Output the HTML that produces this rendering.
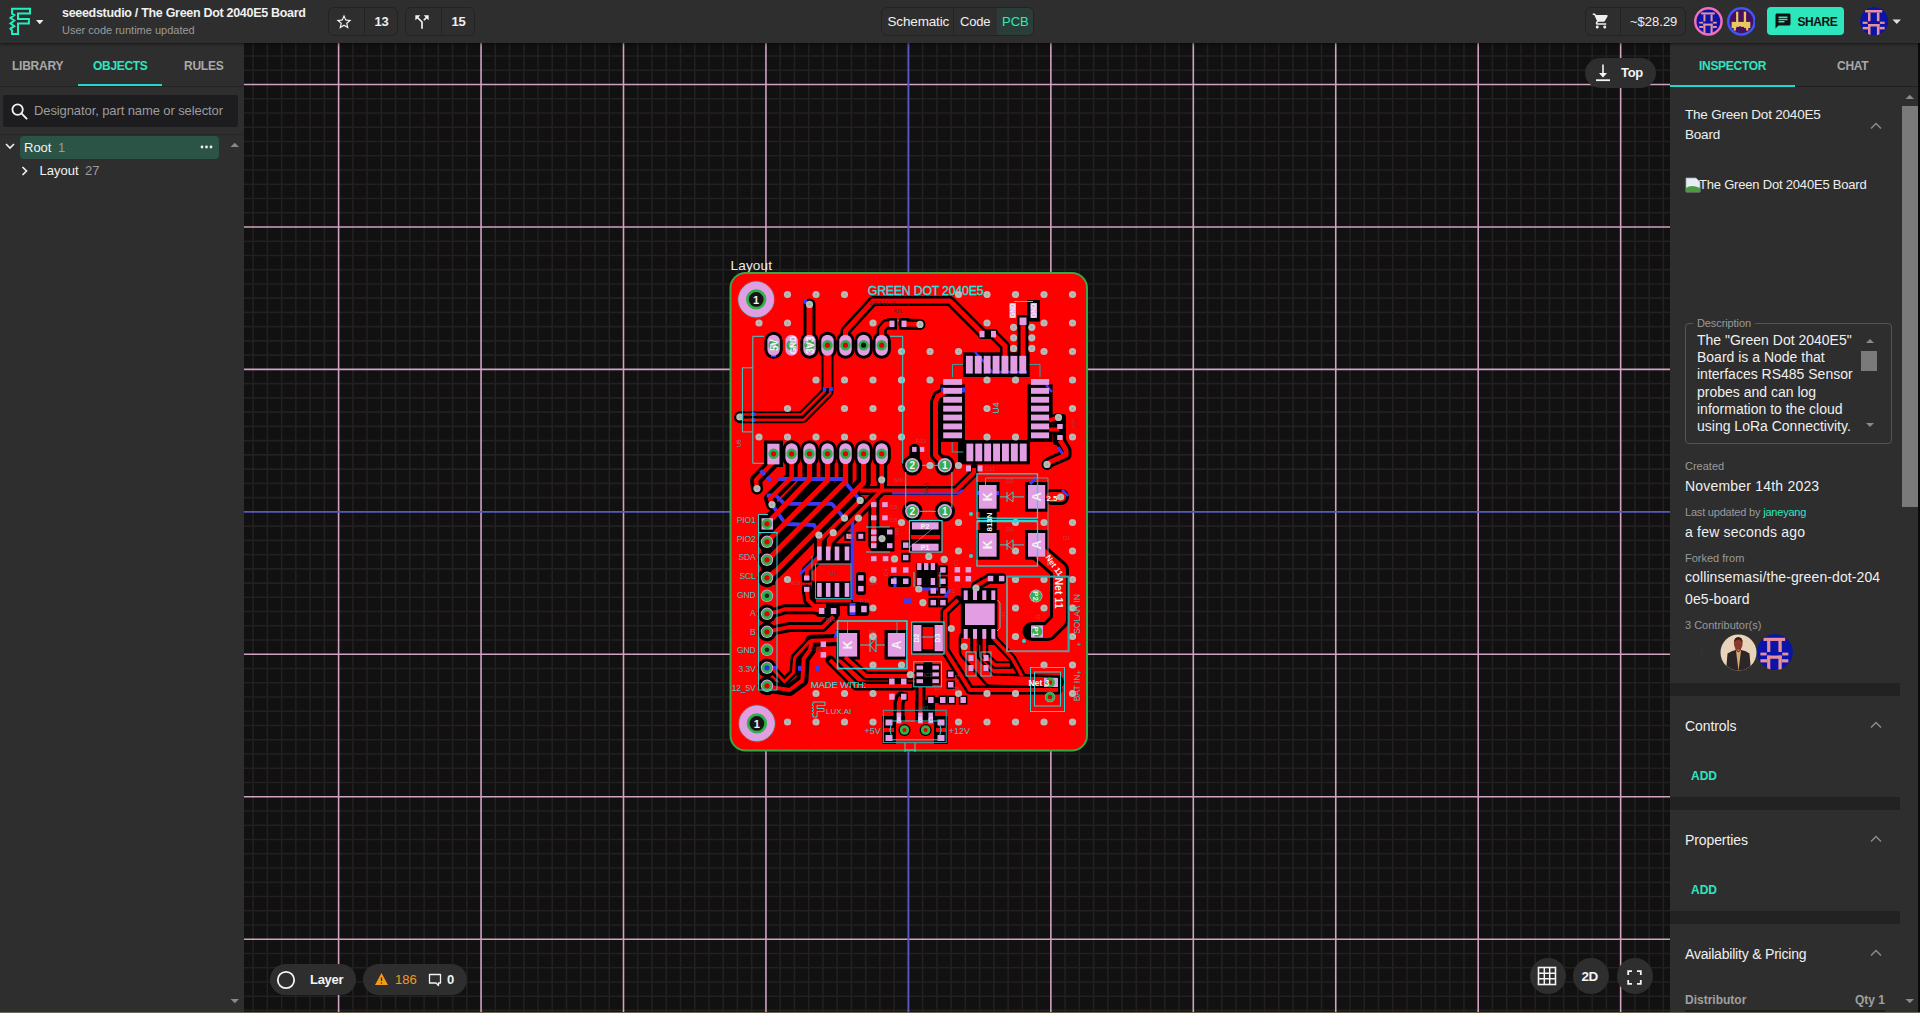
<!DOCTYPE html>
<html><head><meta charset="utf-8">
<style>
*{box-sizing:border-box;margin:0;padding:0}
html,body{width:1920px;height:1013px;overflow:hidden;background:#111111;font-family:"Liberation Sans",sans-serif;color:#fff}
.abs{position:absolute}

.hdr{position:absolute;left:0;top:0;width:1920px;height:43px;background:#2e2e2e;box-shadow:0 1px 3px rgba(0,0,0,.55);z-index:2}
.t{position:absolute;white-space:nowrap;line-height:1}
.lp{position:absolute;left:0;top:43px;width:244px;height:969px;background:#2e2e2e}
.rp{position:absolute;left:1670px;top:43px;width:250px;height:969px;background:#2e2e2e}
.bg{position:absolute;border:1px solid #232323;border-radius:6px;background:#2e2e2e}
.pill{position:absolute;background:#2c2c2c;border-radius:16px}
.circ{position:absolute;background:#2c2c2c;border-radius:50%}

</style></head><body>
<div class="abs" id="canvas" style="left:244px;top:43px;width:1426px;height:969px;background:#111111;overflow:hidden">
<svg class="grid" width="1426" height="969" viewBox="0 0 1426 969"><line x1="9.13" y1="0" x2="9.13" y2="969" stroke="#241f21" stroke-width="1.6"/><line x1="23.38" y1="0" x2="23.38" y2="969" stroke="#241f21" stroke-width="1.6"/><line x1="37.62" y1="0" x2="37.62" y2="969" stroke="#241f21" stroke-width="1.6"/><line x1="51.87" y1="0" x2="51.87" y2="969" stroke="#241f21" stroke-width="1.6"/><line x1="66.11" y1="0" x2="66.11" y2="969" stroke="#241f21" stroke-width="1.6"/><line x1="80.36" y1="0" x2="80.36" y2="969" stroke="#241f21" stroke-width="1.6"/><line x1="108.85" y1="0" x2="108.85" y2="969" stroke="#241f21" stroke-width="1.6"/><line x1="123.09" y1="0" x2="123.09" y2="969" stroke="#241f21" stroke-width="1.6"/><line x1="137.34" y1="0" x2="137.34" y2="969" stroke="#241f21" stroke-width="1.6"/><line x1="151.58" y1="0" x2="151.58" y2="969" stroke="#241f21" stroke-width="1.6"/><line x1="165.83" y1="0" x2="165.83" y2="969" stroke="#241f21" stroke-width="1.6"/><line x1="180.07" y1="0" x2="180.07" y2="969" stroke="#241f21" stroke-width="1.6"/><line x1="194.31" y1="0" x2="194.31" y2="969" stroke="#241f21" stroke-width="1.6"/><line x1="208.56" y1="0" x2="208.56" y2="969" stroke="#241f21" stroke-width="1.6"/><line x1="222.81" y1="0" x2="222.81" y2="969" stroke="#241f21" stroke-width="1.6"/><line x1="251.30" y1="0" x2="251.30" y2="969" stroke="#241f21" stroke-width="1.6"/><line x1="265.54" y1="0" x2="265.54" y2="969" stroke="#241f21" stroke-width="1.6"/><line x1="279.79" y1="0" x2="279.79" y2="969" stroke="#241f21" stroke-width="1.6"/><line x1="294.03" y1="0" x2="294.03" y2="969" stroke="#241f21" stroke-width="1.6"/><line x1="308.27" y1="0" x2="308.27" y2="969" stroke="#241f21" stroke-width="1.6"/><line x1="322.52" y1="0" x2="322.52" y2="969" stroke="#241f21" stroke-width="1.6"/><line x1="336.76" y1="0" x2="336.76" y2="969" stroke="#241f21" stroke-width="1.6"/><line x1="351.01" y1="0" x2="351.01" y2="969" stroke="#241f21" stroke-width="1.6"/><line x1="365.25" y1="0" x2="365.25" y2="969" stroke="#241f21" stroke-width="1.6"/><line x1="393.75" y1="0" x2="393.75" y2="969" stroke="#241f21" stroke-width="1.6"/><line x1="407.99" y1="0" x2="407.99" y2="969" stroke="#241f21" stroke-width="1.6"/><line x1="422.24" y1="0" x2="422.24" y2="969" stroke="#241f21" stroke-width="1.6"/><line x1="436.48" y1="0" x2="436.48" y2="969" stroke="#241f21" stroke-width="1.6"/><line x1="450.73" y1="0" x2="450.73" y2="969" stroke="#241f21" stroke-width="1.6"/><line x1="464.97" y1="0" x2="464.97" y2="969" stroke="#241f21" stroke-width="1.6"/><line x1="479.21" y1="0" x2="479.21" y2="969" stroke="#241f21" stroke-width="1.6"/><line x1="493.46" y1="0" x2="493.46" y2="969" stroke="#241f21" stroke-width="1.6"/><line x1="507.70" y1="0" x2="507.70" y2="969" stroke="#241f21" stroke-width="1.6"/><line x1="536.19" y1="0" x2="536.19" y2="969" stroke="#241f21" stroke-width="1.6"/><line x1="550.44" y1="0" x2="550.44" y2="969" stroke="#241f21" stroke-width="1.6"/><line x1="564.68" y1="0" x2="564.68" y2="969" stroke="#241f21" stroke-width="1.6"/><line x1="578.93" y1="0" x2="578.93" y2="969" stroke="#241f21" stroke-width="1.6"/><line x1="593.17" y1="0" x2="593.17" y2="969" stroke="#241f21" stroke-width="1.6"/><line x1="607.42" y1="0" x2="607.42" y2="969" stroke="#241f21" stroke-width="1.6"/><line x1="621.66" y1="0" x2="621.66" y2="969" stroke="#241f21" stroke-width="1.6"/><line x1="635.91" y1="0" x2="635.91" y2="969" stroke="#241f21" stroke-width="1.6"/><line x1="650.15" y1="0" x2="650.15" y2="969" stroke="#241f21" stroke-width="1.6"/><line x1="678.64" y1="0" x2="678.64" y2="969" stroke="#241f21" stroke-width="1.6"/><line x1="692.89" y1="0" x2="692.89" y2="969" stroke="#241f21" stroke-width="1.6"/><line x1="707.13" y1="0" x2="707.13" y2="969" stroke="#241f21" stroke-width="1.6"/><line x1="721.38" y1="0" x2="721.38" y2="969" stroke="#241f21" stroke-width="1.6"/><line x1="735.62" y1="0" x2="735.62" y2="969" stroke="#241f21" stroke-width="1.6"/><line x1="749.87" y1="0" x2="749.87" y2="969" stroke="#241f21" stroke-width="1.6"/><line x1="764.12" y1="0" x2="764.12" y2="969" stroke="#241f21" stroke-width="1.6"/><line x1="778.36" y1="0" x2="778.36" y2="969" stroke="#241f21" stroke-width="1.6"/><line x1="792.61" y1="0" x2="792.61" y2="969" stroke="#241f21" stroke-width="1.6"/><line x1="821.10" y1="0" x2="821.10" y2="969" stroke="#241f21" stroke-width="1.6"/><line x1="835.34" y1="0" x2="835.34" y2="969" stroke="#241f21" stroke-width="1.6"/><line x1="849.59" y1="0" x2="849.59" y2="969" stroke="#241f21" stroke-width="1.6"/><line x1="863.83" y1="0" x2="863.83" y2="969" stroke="#241f21" stroke-width="1.6"/><line x1="878.07" y1="0" x2="878.07" y2="969" stroke="#241f21" stroke-width="1.6"/><line x1="892.32" y1="0" x2="892.32" y2="969" stroke="#241f21" stroke-width="1.6"/><line x1="906.57" y1="0" x2="906.57" y2="969" stroke="#241f21" stroke-width="1.6"/><line x1="920.81" y1="0" x2="920.81" y2="969" stroke="#241f21" stroke-width="1.6"/><line x1="935.05" y1="0" x2="935.05" y2="969" stroke="#241f21" stroke-width="1.6"/><line x1="963.55" y1="0" x2="963.55" y2="969" stroke="#241f21" stroke-width="1.6"/><line x1="977.79" y1="0" x2="977.79" y2="969" stroke="#241f21" stroke-width="1.6"/><line x1="992.03" y1="0" x2="992.03" y2="969" stroke="#241f21" stroke-width="1.6"/><line x1="1006.28" y1="0" x2="1006.28" y2="969" stroke="#241f21" stroke-width="1.6"/><line x1="1020.53" y1="0" x2="1020.53" y2="969" stroke="#241f21" stroke-width="1.6"/><line x1="1034.77" y1="0" x2="1034.77" y2="969" stroke="#241f21" stroke-width="1.6"/><line x1="1049.01" y1="0" x2="1049.01" y2="969" stroke="#241f21" stroke-width="1.6"/><line x1="1063.26" y1="0" x2="1063.26" y2="969" stroke="#241f21" stroke-width="1.6"/><line x1="1077.51" y1="0" x2="1077.51" y2="969" stroke="#241f21" stroke-width="1.6"/><line x1="1105.99" y1="0" x2="1105.99" y2="969" stroke="#241f21" stroke-width="1.6"/><line x1="1120.24" y1="0" x2="1120.24" y2="969" stroke="#241f21" stroke-width="1.6"/><line x1="1134.49" y1="0" x2="1134.49" y2="969" stroke="#241f21" stroke-width="1.6"/><line x1="1148.73" y1="0" x2="1148.73" y2="969" stroke="#241f21" stroke-width="1.6"/><line x1="1162.97" y1="0" x2="1162.97" y2="969" stroke="#241f21" stroke-width="1.6"/><line x1="1177.22" y1="0" x2="1177.22" y2="969" stroke="#241f21" stroke-width="1.6"/><line x1="1191.47" y1="0" x2="1191.47" y2="969" stroke="#241f21" stroke-width="1.6"/><line x1="1205.71" y1="0" x2="1205.71" y2="969" stroke="#241f21" stroke-width="1.6"/><line x1="1219.95" y1="0" x2="1219.95" y2="969" stroke="#241f21" stroke-width="1.6"/><line x1="1248.45" y1="0" x2="1248.45" y2="969" stroke="#241f21" stroke-width="1.6"/><line x1="1262.69" y1="0" x2="1262.69" y2="969" stroke="#241f21" stroke-width="1.6"/><line x1="1276.93" y1="0" x2="1276.93" y2="969" stroke="#241f21" stroke-width="1.6"/><line x1="1291.18" y1="0" x2="1291.18" y2="969" stroke="#241f21" stroke-width="1.6"/><line x1="1305.43" y1="0" x2="1305.43" y2="969" stroke="#241f21" stroke-width="1.6"/><line x1="1319.67" y1="0" x2="1319.67" y2="969" stroke="#241f21" stroke-width="1.6"/><line x1="1333.91" y1="0" x2="1333.91" y2="969" stroke="#241f21" stroke-width="1.6"/><line x1="1348.16" y1="0" x2="1348.16" y2="969" stroke="#241f21" stroke-width="1.6"/><line x1="1362.40" y1="0" x2="1362.40" y2="969" stroke="#241f21" stroke-width="1.6"/><line x1="1390.89" y1="0" x2="1390.89" y2="969" stroke="#241f21" stroke-width="1.6"/><line x1="1405.14" y1="0" x2="1405.14" y2="969" stroke="#241f21" stroke-width="1.6"/><line x1="1419.38" y1="0" x2="1419.38" y2="969" stroke="#241f21" stroke-width="1.6"/><line x1="0" y1="13.01" x2="1426" y2="13.01" stroke="#241f21" stroke-width="1.6"/><line x1="0" y1="27.25" x2="1426" y2="27.25" stroke="#241f21" stroke-width="1.6"/><line x1="0" y1="55.75" x2="1426" y2="55.75" stroke="#241f21" stroke-width="1.6"/><line x1="0" y1="69.99" x2="1426" y2="69.99" stroke="#241f21" stroke-width="1.6"/><line x1="0" y1="84.23" x2="1426" y2="84.23" stroke="#241f21" stroke-width="1.6"/><line x1="0" y1="98.48" x2="1426" y2="98.48" stroke="#241f21" stroke-width="1.6"/><line x1="0" y1="112.72" x2="1426" y2="112.72" stroke="#241f21" stroke-width="1.6"/><line x1="0" y1="126.97" x2="1426" y2="126.97" stroke="#241f21" stroke-width="1.6"/><line x1="0" y1="141.21" x2="1426" y2="141.21" stroke="#241f21" stroke-width="1.6"/><line x1="0" y1="155.46" x2="1426" y2="155.46" stroke="#241f21" stroke-width="1.6"/><line x1="0" y1="169.70" x2="1426" y2="169.70" stroke="#241f21" stroke-width="1.6"/><line x1="0" y1="198.19" x2="1426" y2="198.19" stroke="#241f21" stroke-width="1.6"/><line x1="0" y1="212.44" x2="1426" y2="212.44" stroke="#241f21" stroke-width="1.6"/><line x1="0" y1="226.69" x2="1426" y2="226.69" stroke="#241f21" stroke-width="1.6"/><line x1="0" y1="240.93" x2="1426" y2="240.93" stroke="#241f21" stroke-width="1.6"/><line x1="0" y1="255.17" x2="1426" y2="255.17" stroke="#241f21" stroke-width="1.6"/><line x1="0" y1="269.42" x2="1426" y2="269.42" stroke="#241f21" stroke-width="1.6"/><line x1="0" y1="283.66" x2="1426" y2="283.66" stroke="#241f21" stroke-width="1.6"/><line x1="0" y1="297.91" x2="1426" y2="297.91" stroke="#241f21" stroke-width="1.6"/><line x1="0" y1="312.15" x2="1426" y2="312.15" stroke="#241f21" stroke-width="1.6"/><line x1="0" y1="340.64" x2="1426" y2="340.64" stroke="#241f21" stroke-width="1.6"/><line x1="0" y1="354.89" x2="1426" y2="354.89" stroke="#241f21" stroke-width="1.6"/><line x1="0" y1="369.13" x2="1426" y2="369.13" stroke="#241f21" stroke-width="1.6"/><line x1="0" y1="383.38" x2="1426" y2="383.38" stroke="#241f21" stroke-width="1.6"/><line x1="0" y1="397.62" x2="1426" y2="397.62" stroke="#241f21" stroke-width="1.6"/><line x1="0" y1="411.87" x2="1426" y2="411.87" stroke="#241f21" stroke-width="1.6"/><line x1="0" y1="426.11" x2="1426" y2="426.11" stroke="#241f21" stroke-width="1.6"/><line x1="0" y1="440.36" x2="1426" y2="440.36" stroke="#241f21" stroke-width="1.6"/><line x1="0" y1="454.60" x2="1426" y2="454.60" stroke="#241f21" stroke-width="1.6"/><line x1="0" y1="483.10" x2="1426" y2="483.10" stroke="#241f21" stroke-width="1.6"/><line x1="0" y1="497.34" x2="1426" y2="497.34" stroke="#241f21" stroke-width="1.6"/><line x1="0" y1="511.59" x2="1426" y2="511.59" stroke="#241f21" stroke-width="1.6"/><line x1="0" y1="525.83" x2="1426" y2="525.83" stroke="#241f21" stroke-width="1.6"/><line x1="0" y1="540.08" x2="1426" y2="540.08" stroke="#241f21" stroke-width="1.6"/><line x1="0" y1="554.32" x2="1426" y2="554.32" stroke="#241f21" stroke-width="1.6"/><line x1="0" y1="568.56" x2="1426" y2="568.56" stroke="#241f21" stroke-width="1.6"/><line x1="0" y1="582.81" x2="1426" y2="582.81" stroke="#241f21" stroke-width="1.6"/><line x1="0" y1="597.05" x2="1426" y2="597.05" stroke="#241f21" stroke-width="1.6"/><line x1="0" y1="625.54" x2="1426" y2="625.54" stroke="#241f21" stroke-width="1.6"/><line x1="0" y1="639.79" x2="1426" y2="639.79" stroke="#241f21" stroke-width="1.6"/><line x1="0" y1="654.03" x2="1426" y2="654.03" stroke="#241f21" stroke-width="1.6"/><line x1="0" y1="668.28" x2="1426" y2="668.28" stroke="#241f21" stroke-width="1.6"/><line x1="0" y1="682.52" x2="1426" y2="682.52" stroke="#241f21" stroke-width="1.6"/><line x1="0" y1="696.77" x2="1426" y2="696.77" stroke="#241f21" stroke-width="1.6"/><line x1="0" y1="711.01" x2="1426" y2="711.01" stroke="#241f21" stroke-width="1.6"/><line x1="0" y1="725.26" x2="1426" y2="725.26" stroke="#241f21" stroke-width="1.6"/><line x1="0" y1="739.50" x2="1426" y2="739.50" stroke="#241f21" stroke-width="1.6"/><line x1="0" y1="768.00" x2="1426" y2="768.00" stroke="#241f21" stroke-width="1.6"/><line x1="0" y1="782.24" x2="1426" y2="782.24" stroke="#241f21" stroke-width="1.6"/><line x1="0" y1="796.49" x2="1426" y2="796.49" stroke="#241f21" stroke-width="1.6"/><line x1="0" y1="810.73" x2="1426" y2="810.73" stroke="#241f21" stroke-width="1.6"/><line x1="0" y1="824.97" x2="1426" y2="824.97" stroke="#241f21" stroke-width="1.6"/><line x1="0" y1="839.22" x2="1426" y2="839.22" stroke="#241f21" stroke-width="1.6"/><line x1="0" y1="853.46" x2="1426" y2="853.46" stroke="#241f21" stroke-width="1.6"/><line x1="0" y1="867.71" x2="1426" y2="867.71" stroke="#241f21" stroke-width="1.6"/><line x1="0" y1="881.95" x2="1426" y2="881.95" stroke="#241f21" stroke-width="1.6"/><line x1="0" y1="910.44" x2="1426" y2="910.44" stroke="#241f21" stroke-width="1.6"/><line x1="0" y1="924.69" x2="1426" y2="924.69" stroke="#241f21" stroke-width="1.6"/><line x1="0" y1="938.93" x2="1426" y2="938.93" stroke="#241f21" stroke-width="1.6"/><line x1="0" y1="953.18" x2="1426" y2="953.18" stroke="#241f21" stroke-width="1.6"/><line x1="0" y1="967.42" x2="1426" y2="967.42" stroke="#241f21" stroke-width="1.6"/><line x1="94.60" y1="0" x2="94.60" y2="969" stroke="#cfa3c1" stroke-width="1.6"/><line x1="237.05" y1="0" x2="237.05" y2="969" stroke="#cfa3c1" stroke-width="1.6"/><line x1="379.50" y1="0" x2="379.50" y2="969" stroke="#cfa3c1" stroke-width="1.6"/><line x1="521.95" y1="0" x2="521.95" y2="969" stroke="#cfa3c1" stroke-width="1.6"/><line x1="806.85" y1="0" x2="806.85" y2="969" stroke="#cfa3c1" stroke-width="1.6"/><line x1="949.30" y1="0" x2="949.30" y2="969" stroke="#cfa3c1" stroke-width="1.6"/><line x1="1091.75" y1="0" x2="1091.75" y2="969" stroke="#cfa3c1" stroke-width="1.6"/><line x1="1234.20" y1="0" x2="1234.20" y2="969" stroke="#cfa3c1" stroke-width="1.6"/><line x1="1376.65" y1="0" x2="1376.65" y2="969" stroke="#cfa3c1" stroke-width="1.6"/><line x1="0" y1="41.50" x2="1426" y2="41.50" stroke="#cfa3c1" stroke-width="1.6"/><line x1="0" y1="183.95" x2="1426" y2="183.95" stroke="#cfa3c1" stroke-width="1.6"/><line x1="0" y1="326.40" x2="1426" y2="326.40" stroke="#cfa3c1" stroke-width="1.6"/><line x1="0" y1="611.30" x2="1426" y2="611.30" stroke="#cfa3c1" stroke-width="1.6"/><line x1="0" y1="753.75" x2="1426" y2="753.75" stroke="#cfa3c1" stroke-width="1.6"/><line x1="0" y1="896.20" x2="1426" y2="896.20" stroke="#cfa3c1" stroke-width="1.6"/><line x1="664.40" y1="0" x2="664.40" y2="969" stroke="#5858c4" stroke-width="1.9"/><line x1="0" y1="468.85" x2="1426" y2="468.85" stroke="#5858c4" stroke-width="1.9"/></svg>
</div>
<div class="hdr">
<svg class="abs" style="left:0;top:0" width="50" height="42" viewBox="0 0 50 42">
<path d="M12.1 8.8 H30 V13.6 H18 V19.1 H28.9 V23.5 H18 V34 H12.1 V30.8 L10.5 28.6 L14.3 26.2 L10.5 23.5 L14.3 20.5 L10.5 18 L14.3 15.05 L12.1 13.6 Z" fill="none" stroke="#24eec0" stroke-width="2" stroke-linejoin="miter"/>
<path d="M36 20 H43.5 L39.75 24.2Z" fill="#eee"/>
</svg>
<div class="t" style="left:62px;top:7px;font-size:12.5px;font-weight:bold;color:#f0f0f0;letter-spacing:-0.3px">seeedstudio / The Green Dot 2040E5 Board</div>
<div class="t" style="left:62px;top:25px;font-size:11px;color:#9a9a9a">User code runtime updated</div>

<div class="bg" style="left:328px;top:7px;width:70px;height:29px"></div>
<div class="abs" style="left:364px;top:8px;width:1px;height:27px;background:#232323"></div>
<svg class="abs" style="left:335.2px;top:13.1px" width="18" height="18" viewBox="0 0 24 24"><path d="M22 9.24l-7.19-.62L12 2 9.19 8.63 2 9.24l5.46 4.73L5.82 21 12 17.27 18.18 21l-1.63-7.03L22 9.24zM12 15.4l-3.76 2.27 1-4.28-3.32-2.88 4.38-.38L12 6.1l1.71 4.04 4.38.38-3.32 2.88 1 4.28L12 15.4z" fill="#f2f2f2"/></svg>
<div class="t" style="left:374.5px;top:15px;font-size:13px;font-weight:bold;color:#eee;letter-spacing:-0.3px">13</div>

<div class="bg" style="left:405px;top:7px;width:70px;height:29px"></div>
<div class="abs" style="left:441px;top:8px;width:1px;height:27px;background:#232323"></div>
<svg class="abs" style="left:411.7px;top:11.7px" width="20" height="20" viewBox="0 0 24 24"><path d="M14 4l2.29 2.29-2.88 2.88 1.42 1.42 2.88-2.88L20 10V4zm-4 0H4v6l2.29-2.29 4.71 4.7V20h2v-8.41l-5.29-5.3z" fill="#f2f2f2"/></svg>
<div class="t" style="left:451.5px;top:15px;font-size:13px;font-weight:bold;color:#eee;letter-spacing:-0.3px">15</div>

<div class="bg" style="left:881px;top:7px;width:153px;height:29px"></div>
<div class="abs" style="left:953px;top:8px;width:1px;height:27px;background:#232323"></div>
<div class="abs" style="left:997px;top:8px;width:36px;height:27px;background:#2b3d38;border-radius:0 5px 5px 0"></div>
<div class="t" style="left:887.5px;top:14.5px;font-size:13.5px;color:#f0f0f0;letter-spacing:-0.15px">Schematic</div>
<div class="t" style="left:960px;top:15px;font-size:13px;color:#f0f0f0;letter-spacing:-0.2px">Code</div>
<div class="t" style="left:1002px;top:15px;font-size:13px;color:#2fe8b8">PCB</div>

<div class="bg" style="left:1585px;top:7px;width:101px;height:29px"></div>
<div class="abs" style="left:1620px;top:8px;width:1px;height:27px;background:#232323"></div>
<svg class="abs" style="left:1592px;top:12px" width="18" height="18" viewBox="0 0 24 24"><path d="M7 18c-1.1 0-2 .9-2 2s.9 2 2 2 2-.9 2-2-.9-2-2-2zM1 2v2h2l3.6 7.6-1.4 2.4c-.1.3-.2.6-.2 1 0 1.1.9 2 2 2h12v-2H7.4c-.1 0-.2-.1-.2-.2v-.1l.9-1.7h7.4c.8 0 1.4-.4 1.7-1l3.6-6.5c.1-.2.1-.3.1-.5 0-.6-.4-1-1-1H5.2l-.9-2H1zm16 16c-1.1 0-2 .9-2 2s.9 2 2 2 2-.9 2-2-.9-2-2-2z" fill="#eee"/></svg>
<div class="t" style="left:1630px;top:15px;font-size:13px;color:#eee;letter-spacing:0px">~$28.29</div>

<svg class="abs" style="left:1694.1999999999998px;top:7.1px" width="28.8" height="28.8" viewBox="-14.4 -14.4 28.8 28.8"><defs><clipPath id="ac170821"><circle cx="0" cy="0" r="14.4"/></clipPath></defs><g clip-path="url(#ac170821)"><circle cx="0" cy="0" r="14.4" fill="#0a14a8"/><g fill="#e8909a"><rect x="-7.28" y="-8.96" width="13.68" height="2.00"/><rect x="-4.96" y="-6.96" width="2.00" height="6.96"/><rect x="2.16" y="-6.96" width="2.08" height="6.96"/><rect x="-9.20" y="0.40" width="3.92" height="1.76"/><rect x="4.56" y="0.40" width="3.84" height="1.76"/><rect x="-4.96" y="2.24" width="9.20" height="2.00"/><rect x="-9.20" y="4.56" width="4.24" height="2.00"/><rect x="4.24" y="4.56" width="4.16" height="2.00"/><rect x="-4.96" y="2.24" width="2.00" height="9.36"/><rect x="2.16" y="2.24" width="2.08" height="9.36"/></g></g><circle cx="0" cy="0" r="13.15" fill="none" stroke="#f070b0" stroke-width="2.5"/></svg>
<svg class="abs" style="left:1726.6px;top:7.1px" width="28.8" height="28.8" viewBox="-14.4 -14.4 28.8 28.8"><defs><clipPath id="ac174121"><circle cx="0" cy="0" r="14.4"/></clipPath></defs><g clip-path="url(#ac174121)"><circle cx="0" cy="0" r="14.4" fill="#4a1060"/><g fill="#e8c860"><rect x="-5.30" y="-9.70" width="2.20" height="10.40"/><rect x="2.40" y="-9.70" width="2.30" height="10.40"/><rect x="-9.80" y="0.50" width="18.70" height="4.20"/><rect x="-9.80" y="4.50" width="4.80" height="2.10"/><rect x="2.70" y="4.50" width="6.20" height="2.10"/><rect x="-7.70" y="6.50" width="2.20" height="2.60"/><rect x="4.70" y="6.50" width="2.20" height="2.60"/><rect x="-5.20" y="4.50" width="3.20" height="1.00"/><rect x="-0.50" y="4.50" width="3.30" height="1.00"/></g></g><circle cx="0" cy="0" r="13.15" fill="none" stroke="#3a58f8" stroke-width="2.5"/></svg>
<div class="abs" style="left:1767px;top:7px;width:77px;height:28px;background:#2de6bb;border-radius:4px"></div>
<svg class="abs" style="left:1774px;top:12px" width="18" height="18" viewBox="0 0 24 24"><path d="M20 2H4c-1.1 0-2 .9-2 2v18l4-4h14c1.1 0 2-.9 2-2V4c0-1.1-.9-2-2-2zM6 9h12v2H6zm8 5H6v-2h8zm4-6H6V6h12z" fill="#111"/></svg>
<div class="t" style="left:1797.5px;top:15.5px;font-size:12px;font-weight:bold;color:#111;letter-spacing:-0.45px">SHARE</div>
<svg class="abs" style="left:1860.0px;top:7.199999999999999px" width="28.4" height="28.4" viewBox="-14.2 -14.2 28.4 28.4"><defs><clipPath id="ac187421"><circle cx="0" cy="0" r="14.2"/></clipPath></defs><g clip-path="url(#ac187421)"><circle cx="0" cy="0" r="14.2" fill="#0a14a8"/><g fill="#e8909a"><rect x="-9.10" y="-11.20" width="17.10" height="2.50"/><rect x="-6.20" y="-8.70" width="2.50" height="8.70"/><rect x="2.70" y="-8.70" width="2.60" height="8.70"/><rect x="-11.50" y="0.50" width="4.90" height="2.20"/><rect x="5.70" y="0.50" width="4.80" height="2.20"/><rect x="-6.20" y="2.80" width="11.50" height="2.50"/><rect x="-11.50" y="5.70" width="5.30" height="2.50"/><rect x="5.30" y="5.70" width="5.20" height="2.50"/><rect x="-6.20" y="2.80" width="2.50" height="11.70"/><rect x="2.70" y="2.80" width="2.60" height="11.70"/></g></g></svg>
<svg class="abs" style="left:1892px;top:19px" width="10" height="6" viewBox="0 0 10 6"><path d="M0.5 0.5 H9 L4.75 5Z" fill="#ddd"/></svg>
</div><div class="lp">
<div class="t" style="left:12px;top:17px;font-size:12px;font-weight:bold;color:#a9a9a9;letter-spacing:-0.25px">LIBRARY</div>
<div class="t" style="left:93px;top:17px;font-size:12px;font-weight:bold;color:#2de6c0;letter-spacing:-0.3px">OBJECTS</div>
<div class="t" style="left:184px;top:17px;font-size:12px;font-weight:bold;color:#a9a9a9;letter-spacing:-0.25px">RULES</div>
<div class="abs" style="left:0;top:43px;width:244px;height:1px;background:#222"></div>
<div class="abs" style="left:78px;top:41px;width:84px;height:2px;background:#22d8cc"></div>
<div class="abs" style="left:3px;top:52px;width:235px;height:32px;background:#1d1d1f;border-radius:2px"></div>
<svg class="abs" style="left:11px;top:60px" width="17" height="17" viewBox="0 0 17 17"><circle cx="6.6" cy="6.6" r="5.2" fill="none" stroke="#f2f2f2" stroke-width="1.8"/><path d="M10.4 10.4 L15.6 15.6" stroke="#f2f2f2" stroke-width="1.9" stroke-linecap="round"/></svg>
<div class="t" style="left:34px;top:61px;font-size:13px;color:#9c9c9c;letter-spacing:-0.1px">Designator, part name or selector</div>
<div class="abs" style="left:0;top:91px;width:244px;height:1px;background:#262626"></div>
<div class="abs" style="left:20px;top:92.5px;width:199px;height:23px;background:#2c5446;border-radius:4px"></div>
<svg class="abs" style="left:4px;top:99px" width="12" height="9" viewBox="0 0 12 9"><path d="M2 2 L6 6 L10 2" fill="none" stroke="#eee" stroke-width="1.7"/></svg>
<div class="t" style="left:24px;top:97.5px;font-size:13px;color:#f2f2f2">Root</div>
<div class="t" style="left:58px;top:97.5px;font-size:13px;color:#9a9a9a">1</div>
<svg class="abs" style="left:200px;top:101px" width="14" height="6" viewBox="0 0 14 6"><circle cx="2" cy="3" r="1.4" fill="#eee"/><circle cx="6.5" cy="3" r="1.4" fill="#eee"/><circle cx="11" cy="3" r="1.4" fill="#eee"/></svg>
<svg class="abs" style="left:230px;top:99px" width="10" height="6" viewBox="0 0 10 6"><path d="M0.5 5 H9 L4.75 0.8Z" fill="#888"/></svg>
<svg class="abs" style="left:20px;top:122px" width="9" height="12" viewBox="0 0 9 12"><path d="M2.5 2 L6.5 6 L2.5 10" fill="none" stroke="#eee" stroke-width="1.7"/></svg>
<div class="t" style="left:39.5px;top:120.5px;font-size:13px;color:#f2f2f2">Layout</div>
<div class="t" style="left:85px;top:120.5px;font-size:13px;color:#9a9a9a">27</div>
<svg class="abs" style="left:230px;top:955px" width="10" height="6" viewBox="0 0 10 6"><path d="M0.5 1 H9 L4.75 5.2Z" fill="#888"/></svg>
</div><div class="rp">
<div class="t" style="left:29px;top:17px;font-size:12px;font-weight:bold;color:#2de6c0;letter-spacing:-0.3px">INSPECTOR</div>
<div class="t" style="left:167px;top:17px;font-size:12px;font-weight:bold;color:#a9a9a9;letter-spacing:-0.25px">CHAT</div>
<div class="abs" style="left:0;top:43px;width:250px;height:1px;background:#1f1f1f"></div>
<div class="abs" style="left:0;top:41.5px;width:125px;height:2px;background:#22d8cc"></div>
<div class="abs" style="left:232px;top:63px;width:16px;height:401px;background:#7a7a7a"></div>
<svg class="abs" style="left:235px;top:51px" width="10" height="6" viewBox="0 0 10 6"><path d="M0.5 5 H9 L4.75 0.8Z" fill="#8a8a8a"/></svg>
<svg class="abs" style="left:235px;top:955px" width="10" height="6" viewBox="0 0 10 6"><path d="M0.5 1 H9 L4.75 5.2Z" fill="#8a8a8a"/></svg>
<div class="abs" style="left:248px;top:0;width:2px;height:969px;background:#0a0a0a"></div>

<div class="t" style="left:15px;top:61.5px;font-size:13.5px;color:#eee;line-height:20.3px;letter-spacing:-0.2px">The Green Dot 2040E5<br>Board</div>
<svg class="abs" style="left:200px;top:79px" width="12" height="8" viewBox="0 0 12 8"><path d="M1 6.5 L6 1.5 L11 6.5" fill="none" stroke="#8a8a8a" stroke-width="1.5"/></svg>
<svg class="abs" style="left:15px;top:134px" width="16" height="16" viewBox="0 0 16 16"><path d="M1 1 H11 L15 5 V15 H1Z" fill="#e8eef4" stroke="#9aa" stroke-width="0.8"/><path d="M1 15 L1 11 Q6 7 15 11 V15Z" fill="#4a9a40"/></svg>
<div class="t" style="left:29px;top:135px;font-size:13px;color:#eee;letter-spacing:-0.2px">The Green Dot 2040E5 Board</div>

<div class="abs" style="left:15px;top:280px;width:207px;height:121px;border:1px solid #555;border-radius:4px"></div>
<div class="abs" style="left:23px;top:275px;width:62px;height:10px;background:#2e2e2e"></div>
<div class="t" style="left:27px;top:275px;font-size:11px;color:#9a9a9a;letter-spacing:-0.1px">Description</div>
<div class="t" style="left:27px;top:289px;font-size:14px;color:#f0f0f0;line-height:17.2px;white-space:normal;width:175px;letter-spacing:0px">The "Green Dot 2040E5" Board is a Node that interfaces RS485 Sensor probes and can log information to the cloud using LoRa Connectivity.</div>
<svg class="abs" style="left:195px;top:295px" width="10" height="6" viewBox="0 0 10 6"><path d="M1 5 H9 L5 1Z" fill="#8a8a8a"/></svg>
<div class="abs" style="left:191px;top:308px;width:16px;height:20px;background:#7a7a7a"></div>
<svg class="abs" style="left:195px;top:379px" width="10" height="6" viewBox="0 0 10 6"><path d="M1 1 H9 L5 5Z" fill="#8a8a8a"/></svg>

<div class="t" style="left:15px;top:418px;font-size:11px;color:#9a9a9a">Created</div>
<div class="t" style="left:15px;top:436px;font-size:14px;color:#f0f0f0;letter-spacing:0.2px">November 14th 2023</div>
<div class="t" style="left:15px;top:464px;font-size:11px;color:#9a9a9a;letter-spacing:-0.2px">Last updated by <span style="color:#2de6c0">janeyang</span></div>
<div class="t" style="left:15px;top:482px;font-size:14px;color:#f0f0f0;letter-spacing:0.2px">a few seconds ago</div>
<div class="t" style="left:15px;top:510px;font-size:11px;color:#9a9a9a">Forked from</div>
<div class="t" style="left:15px;top:524px;font-size:14px;color:#f0f0f0;line-height:21.5px;letter-spacing:0.1px">collinsemasi/the-green-dot-204<br>0e5-board</div>
<div class="t" style="left:15px;top:577px;font-size:11px;color:#9a9a9a">3 Contributor(s)</div>
<div class="t" style="left:30px;top:600px;font-size:14px;color:#333">j</div>
<svg class="abs" style="left:50px;top:591px" width="37" height="37" viewBox="0 0 37 37"><defs><clipPath id="pc"><circle cx="18.5" cy="18.5" r="18"/></clipPath></defs><g clip-path="url(#pc)"><rect width="37" height="37" fill="#e8d4ba"/><path d="M6 37 L7.5 19.5 Q12 16.5 15.5 16 L18.5 18 L21.5 16 Q26 16.5 29.5 19.5 L31 37Z" fill="#2e2626"/><path d="M16 16.5 L18.5 37 L21 16.5 L18.5 18Z" fill="#d8a878"/><ellipse cx="18.3" cy="10" rx="4.3" ry="6" fill="#8a3a2a"/><path d="M13.8 9 Q14 3 18.3 3 Q22.6 3 22.8 9 Q21 5.5 18.3 5.5 Q15.6 5.5 13.8 9Z" fill="#3a1a12"/><path d="M15.5 14 L18.3 17 L21 14 L21 16 L18.3 18.5 L15.5 16Z" fill="#7a3020"/></g></svg>
<svg class="abs" style="left:86.7px;top:591px" width="36" height="36" viewBox="-18 -18 36 36"><defs><clipPath id="ac1774652"><circle cx="0" cy="0" r="18"/></clipPath></defs><g clip-path="url(#ac1774652)"><circle cx="0" cy="0" r="18" fill="#0a14a8"/><g fill="#e8909a"><rect x="-11.56" y="-14.22" width="21.72" height="3.17"/><rect x="-7.87" y="-11.05" width="3.17" height="11.05"/><rect x="3.43" y="-11.05" width="3.30" height="11.05"/><rect x="-14.61" y="0.64" width="6.22" height="2.79"/><rect x="7.24" y="0.64" width="6.10" height="2.79"/><rect x="-7.87" y="3.56" width="14.61" height="3.17"/><rect x="-14.61" y="7.24" width="6.73" height="3.17"/><rect x="6.73" y="7.24" width="6.60" height="3.17"/><rect x="-7.87" y="3.56" width="3.17" height="14.86"/><rect x="3.43" y="3.56" width="3.30" height="14.86"/></g></g></svg>

<div class="abs" style="left:0;top:640px;width:230px;height:13px;background:#222"></div>
<div class="t" style="left:15px;top:676px;font-size:14px;color:#f0f0f0;letter-spacing:-0.1px">Controls</div>
<svg class="abs" style="left:200px;top:678px" width="12" height="8" viewBox="0 0 12 8"><path d="M1 6.5 L6 1.5 L11 6.5" fill="none" stroke="#8a8a8a" stroke-width="1.5"/></svg>
<div class="t" style="left:21px;top:727px;font-size:12px;font-weight:bold;color:#2de6c0">ADD</div>

<div class="abs" style="left:0;top:754px;width:230px;height:13px;background:#222"></div>
<div class="t" style="left:15px;top:790px;font-size:14px;color:#f0f0f0;letter-spacing:-0.1px">Properties</div>
<svg class="abs" style="left:200px;top:792px" width="12" height="8" viewBox="0 0 12 8"><path d="M1 6.5 L6 1.5 L11 6.5" fill="none" stroke="#8a8a8a" stroke-width="1.5"/></svg>
<div class="t" style="left:21px;top:841px;font-size:12px;font-weight:bold;color:#2de6c0">ADD</div>

<div class="abs" style="left:0;top:868px;width:230px;height:13px;background:#222"></div>
<div class="t" style="left:15px;top:904px;font-size:14px;color:#f0f0f0;letter-spacing:-0.2px">Availability &amp; Pricing</div>
<svg class="abs" style="left:200px;top:906px" width="12" height="8" viewBox="0 0 12 8"><path d="M1 6.5 L6 1.5 L11 6.5" fill="none" stroke="#8a8a8a" stroke-width="1.5"/></svg>
<div class="t" style="left:15px;top:951px;font-size:12px;font-weight:bold;color:#a0a0a0">Distributor</div>
<div class="t" style="left:185px;top:951px;font-size:12px;font-weight:bold;color:#a0a0a0">Qty 1</div>
<div class="abs" style="left:15px;top:967px;width:200px;height:1.5px;background:#1e1e1e"></div>
</div>
<div class="pill" style="left:1585px;top:58px;width:71px;height:30px;border-radius:15px;background:#2e2e2e"></div>
<svg class="abs" style="left:1594px;top:63px" width="18" height="20" viewBox="0 0 18 20"><path d="M9 1.5 V13.5" stroke="#f4f4f4" stroke-width="1.6"/><path d="M5 10 L9 14.5 L13 10Z" fill="#f4f4f4"/><path d="M2 17.2 H16" stroke="#f4f4f4" stroke-width="1.8"/></svg>
<div class="t" style="left:1621px;top:66px;font-size:13px;font-weight:bold;color:#f4f4f4;letter-spacing:-0.3px">Top</div>

<div class="pill" style="left:269.5px;top:964px;width:86px;height:31px;border-radius:15.5px;background:#2e2e2e"></div>
<svg class="abs" style="left:276px;top:970px" width="20" height="20" viewBox="0 0 20 20"><circle cx="10" cy="10" r="8.2" fill="none" stroke="#f4f4f4" stroke-width="1.8"/></svg>
<div class="t" style="left:310px;top:973px;font-size:13px;font-weight:bold;color:#f4f4f4;letter-spacing:-0.3px">Layer</div>

<div class="pill" style="left:363px;top:964px;width:104px;height:31px;border-radius:15.5px;background:#2e2e2e"></div>
<svg class="abs" style="left:374px;top:972px" width="15" height="14" viewBox="0 0 15 14"><path d="M7.5 1 L14 13 H1Z" fill="#f39a1a"/><path d="M7.5 5.5 V9" stroke="#2e2e2e" stroke-width="1.3"/><circle cx="7.5" cy="11" r="0.7" fill="#2e2e2e"/></svg>
<div class="t" style="left:395px;top:973px;font-size:13px;color:#f39a1a">186</div>
<svg class="abs" style="left:428px;top:973px" width="14" height="14" viewBox="0 0 14 14"><path d="M1.5 1.5 H12.5 V10 H10.5 V12.5 L8 10 H1.5Z" fill="none" stroke="#f4f4f4" stroke-width="1.3" stroke-linejoin="round"/></svg>
<div class="t" style="left:447px;top:973px;font-size:13px;font-weight:bold;color:#f4f4f4">0</div>

<div class="circ" style="left:1530px;top:958px;width:36px;height:36px;background:#2e2e2e"></div>
<svg class="abs" style="left:1537px;top:966px" width="20" height="20" viewBox="0 0 20 20"><rect x="1.5" y="1.5" width="17" height="17" fill="none" stroke="#f4f4f4" stroke-width="1.6"/><path d="M7.3 1.5V18.5M12.7 1.5V18.5M1.5 7.3H18.5M1.5 12.7H18.5" stroke="#f4f4f4" stroke-width="1.5"/></svg>
<div class="circ" style="left:1573px;top:958px;width:36px;height:36px;background:#2e2e2e"></div>
<div class="t" style="left:1581.5px;top:969.5px;font-size:13.5px;font-weight:bold;color:#f4f4f4;letter-spacing:-0.4px">2D</div>
<div class="circ" style="left:1616.5px;top:958px;width:36px;height:36px;background:#2e2e2e"></div>
<svg class="abs" style="left:1626.5px;top:969.5px" width="15" height="15" viewBox="0 0 15 15"><path d="M1.2 5V1.2H5M10 1.2H13.8V5M13.8 10V13.8H10M5 13.8H1.2V10" fill="none" stroke="#f4f4f4" stroke-width="1.8"/></svg>
<div class="abs" style="left:0;top:1012px;width:1920px;height:1px;background:#6a6858"></div>

<svg class="abs" style="left:720px;top:250px;font-family:'Liberation Sans',sans-serif" width="380" height="510" viewBox="720 250 380 510">
<text x="730.6" y="270" font-size="13.6" fill="#ececec" letter-spacing="0.1">Layout</text>
<rect x="730.5" y="273" width="356.5" height="477.5" rx="15" fill="#ff0000" stroke="#3aa648" stroke-width="2"/>
<g><polyline points="809.5,304.4 809.5,345.0" fill="none" stroke="#000000" stroke-width="12" stroke-linejoin="round" stroke-linecap="round"/><polyline points="845.5,345.0 845.5,331.0 873.0,301.0 950.0,301.0 983.0,334.0" fill="none" stroke="#000000" stroke-width="10" stroke-linejoin="round" stroke-linecap="round"/><polyline points="993.0,334.0 1005.0,346.0 1005.0,360.0" fill="none" stroke="#000000" stroke-width="10" stroke-linejoin="round" stroke-linecap="round"/><polyline points="904.0,323.9 920.0,324.4" fill="none" stroke="#000000" stroke-width="11" stroke-linejoin="round" stroke-linecap="round"/><polyline points="892.0,323.9 886.0,324.0 881.7,329.0 881.7,345.0" fill="none" stroke="#000000" stroke-width="10" stroke-linejoin="round" stroke-linecap="round"/><polyline points="827.5,345.0 827.5,392.0 802.5,417.2 740.0,417.2" fill="none" stroke="#000" stroke-width="12" stroke-linejoin="round" stroke-linecap="round"/><rect x="764.4" y="331.7" width="18.4" height="27.0" rx="9.2" fill="#000000"/><rect x="800.3" y="331.7" width="18.4" height="27.0" rx="9.2" fill="#000000"/><rect x="818.3" y="331.7" width="18.4" height="27.0" rx="9.2" fill="#000000"/><rect x="836.3" y="331.7" width="18.4" height="27.0" rx="9.2" fill="#000000"/><rect x="854.4" y="331.7" width="18.4" height="27.0" rx="9.2" fill="#000000"/><rect x="872.5" y="331.7" width="18.4" height="27.0" rx="9.2" fill="#000000"/><rect x="887.0" y="318.15" width="10.0" height="11.5" rx="0" fill="#000000"/><rect x="899.0" y="318.15" width="10.0" height="11.5" rx="0" fill="#000000"/><polyline points="1023.0,321.0 1023.0,358.0" fill="none" stroke="#000000" stroke-width="11" stroke-linejoin="round" stroke-linecap="round"/><rect x="1027" y="300" width="13.0" height="21.5" rx="0" fill="#000000"/><rect x="1017.0" y="315.0" width="12.0" height="12.5" rx="0" fill="#000000"/><rect x="978" y="329" width="20.0" height="10.0" rx="4" fill="#000000"/><rect x="963" y="352.3" width="66.6" height="24.7" rx="0" fill="#000000"/><rect x="940.2" y="384.4" width="24.7" height="57.6" rx="0" fill="#000000"/><rect x="1027.5" y="384.4" width="25.1" height="57.6" rx="0" fill="#000000"/><rect x="958" y="440" width="72.0" height="24.3" rx="0" fill="#000000"/><polyline points="945.0,393.0 938.0,396.0 935.5,402.0 935.5,455.0 944.8,465.0" fill="none" stroke="#000000" stroke-width="11" stroke-linejoin="round" stroke-linecap="round"/><polyline points="1049.0,420.5 1058.5,417.4" fill="none" stroke="#000000" stroke-width="9" stroke-linejoin="round" stroke-linecap="round"/><polyline points="1049.0,429.5 1059.0,429.5" fill="none" stroke="#000000" stroke-width="9" stroke-linejoin="round" stroke-linecap="round"/><rect x="1053" y="414" width="13.0" height="31.0" rx="3" fill="#000000"/><polyline points="1060.0,440.0 1066.0,450.0 1066.0,455.0 1050.0,462.0 1047.0,464.4" fill="none" stroke="#000000" stroke-width="11" stroke-linejoin="round" stroke-linecap="round"/><rect x="909" y="444" width="11.0" height="18.0" rx="5" fill="#000000"/><circle cx="912.3" cy="465.3" r="10.2" fill="#000000"/><circle cx="944.8" cy="465.3" r="10.2" fill="#000000"/><circle cx="912.3" cy="511.3" r="10.2" fill="#000000"/><circle cx="944.8" cy="511.3" r="10.2" fill="#000000"/><polyline points="860.0,490.5 956.0,490.5 974.0,472.5 974.0,468.0" fill="none" stroke="#000000" stroke-width="9" stroke-linejoin="round" stroke-linecap="round"/><polyline points="773.6,462.0 756.0,480.0 757.0,488.6" fill="none" stroke="#000000" stroke-width="12" stroke-linejoin="round" stroke-linecap="round"/><polyline points="791.6,454.0 791.6,477.0 770.0,498.5 772.0,504.6" fill="none" stroke="#000000" stroke-width="12" stroke-linejoin="round" stroke-linecap="round"/><polyline points="809.5,454.0 809.5,479.5 772.5,518.0 767.0,523.8" fill="none" stroke="#000000" stroke-width="14.2" stroke-linejoin="round" stroke-linecap="round"/><polyline points="827.5,454.0 827.5,480.5 772.5,536.0 767.0,541.5" fill="none" stroke="#000000" stroke-width="14.2" stroke-linejoin="round" stroke-linecap="round"/><polyline points="845.5,454.0 845.5,481.5 772.0,555.5 767.0,560.0" fill="none" stroke="#000000" stroke-width="14.2" stroke-linejoin="round" stroke-linecap="round"/><polyline points="863.6,454.0 863.6,482.6 777.0,570.0 771.0,575.0 767.0,577.7" fill="none" stroke="#000000" stroke-width="14.2" stroke-linejoin="round" stroke-linecap="round"/><polyline points="881.7,454.0 881.7,479.8" fill="none" stroke="#000000" stroke-width="11" stroke-linejoin="round" stroke-linecap="round"/><polyline points="860.2,500.4 820.0,540.0 819.3,548.0" fill="none" stroke="#000000" stroke-width="10" stroke-linejoin="round" stroke-linecap="round"/><polyline points="882.0,479.8 882.0,490.0 850.0,522.0 830.0,542.0 829.0,548.0" fill="none" stroke="#000000" stroke-width="10" stroke-linejoin="round" stroke-linecap="round"/><rect x="800" y="495" width="45.0" height="15.0" rx="0" fill="#000000"/><rect x="764" y="440.5" width="19.0" height="26.5" rx="0" fill="#000000"/><rect x="782.4" y="440.3" width="18.4" height="27.0" rx="9.2" fill="#000000"/><rect x="800.3" y="440.3" width="18.4" height="27.0" rx="9.2" fill="#000000"/><rect x="818.3" y="440.3" width="18.4" height="27.0" rx="9.2" fill="#000000"/><rect x="836.3" y="440.3" width="18.4" height="27.0" rx="9.2" fill="#000000"/><rect x="854.4" y="440.3" width="18.4" height="27.0" rx="9.2" fill="#000000"/><rect x="872.5" y="440.3" width="18.4" height="27.0" rx="9.2" fill="#000000"/><polyline points="767.0,613.8 778.0,611.6 785.0,609.2 813.3,609.2 821.6,611.0" fill="none" stroke="#000000" stroke-width="10" stroke-linejoin="round" stroke-linecap="round"/><polyline points="767.0,631.8 778.0,629.4 789.6,627.0 822.8,627.0 833.5,616.3" fill="none" stroke="#000000" stroke-width="10" stroke-linejoin="round" stroke-linecap="round"/><polyline points="767.0,686.6 789.6,690.0 802.4,680.4 803.7,658.6 810.1,649.7 811.4,640.7 837.0,640.0" fill="none" stroke="#000000" stroke-width="12" stroke-linejoin="round" stroke-linecap="round"/><polyline points="772.0,668.3 784.4,681.7 793.4,672.7 794.7,657.4 810.1,640.7" fill="none" stroke="#000000" stroke-width="8" stroke-linejoin="round" stroke-linecap="round"/><rect x="761" y="534" width="14.0" height="51.0" rx="0" fill="#000000"/><rect x="758.5" y="515" width="17.0" height="17.5" rx="0" fill="#000000"/><circle cx="767" cy="541.8" r="9.4" fill="#000000"/><circle cx="767" cy="559.8" r="9.4" fill="#000000"/><circle cx="767" cy="577.8" r="9.4" fill="#000000"/><circle cx="767" cy="613.8" r="9.4" fill="#000000"/><circle cx="767" cy="631.8" r="9.4" fill="#000000"/><circle cx="767" cy="667.8" r="9.4" fill="#000000"/><circle cx="767" cy="685.8" r="9.4" fill="#000000"/><polyline points="806.8,589.7 808.0,600.0 814.0,606.0 826.0,606.0" fill="none" stroke="#000000" stroke-width="10" stroke-linejoin="round" stroke-linecap="round"/><polyline points="806.8,577.8 806.8,570.0 818.9,558.0 818.9,535.2" fill="none" stroke="#000000" stroke-width="10" stroke-linejoin="round" stroke-linecap="round"/><polyline points="833.2,532.7 828.8,540.0 828.8,550.0" fill="none" stroke="#000000" stroke-width="9" stroke-linejoin="round" stroke-linecap="round"/><rect x="814" y="543" width="38.0" height="20.5" rx="0" fill="#000000"/><rect x="812" y="581" width="41.0" height="25.0" rx="0" fill="#000000"/><rect x="802.05" y="573.5" width="9.5" height="9.0" rx="0" fill="#000000"/><rect x="802.05" y="584.8" width="9.5" height="9.0" rx="0" fill="#000000"/><rect x="856" y="572" width="10.0" height="23.0" rx="3" fill="#000000"/><rect x="816" y="605" width="24.0" height="12.0" rx="3" fill="#000000"/><rect x="847" y="602" width="22.0" height="14.0" rx="3" fill="#000000"/><polyline points="845.0,657.0 866.0,676.0 915.0,676.0" fill="none" stroke="#000000" stroke-width="9" stroke-linejoin="round" stroke-linecap="round"/><polyline points="830.0,660.0 856.0,686.0 912.0,686.0" fill="none" stroke="#000000" stroke-width="9" stroke-linejoin="round" stroke-linecap="round"/><rect x="836" y="630" width="24.0" height="29.5" rx="0" fill="#000000"/><rect x="884.5" y="630" width="23.5" height="29.5" rx="0" fill="#000000"/><polyline points="873.8,500.0 873.8,545.0" fill="none" stroke="#000000" stroke-width="11" stroke-linejoin="round" stroke-linecap="round"/><rect x="870.6" y="527" width="23.9" height="24.6" rx="1" fill="#000000"/><rect x="844.3" y="531.8" width="9.0" height="9.0" rx="0" fill="#000000"/><rect x="856.3" y="531.8" width="9.0" height="9.0" rx="0" fill="#000000"/><rect x="888" y="576" width="23.0" height="11.0" rx="3" fill="#000000"/><rect x="909.5" y="520.5" width="32.5" height="31.5" rx="0" fill="#000000"/><rect x="900.95" y="540.35" width="9.5" height="9.5" rx="0" fill="#000000"/><rect x="900.95" y="552.75" width="9.5" height="9.5" rx="0" fill="#000000"/><rect x="916.4" y="562.9" width="21.3" height="26.1" rx="0" fill="#000000"/><rect x="938.25" y="565.25" width="9.5" height="9.5" rx="0" fill="#000000"/><rect x="938.25" y="576.45" width="9.5" height="9.5" rx="0" fill="#000000"/><rect x="928.45" y="586.25" width="9.5" height="9.5" rx="0" fill="#000000"/><rect x="938.25" y="586.25" width="9.5" height="9.5" rx="0" fill="#000000"/><rect x="928.45" y="597.85" width="9.5" height="9.5" rx="0" fill="#000000"/><rect x="938.25" y="597.85" width="9.5" height="9.5" rx="0" fill="#000000"/><rect x="1044" y="489" width="25.0" height="16.0" rx="8" fill="#000000"/><rect x="979.6" y="505" width="17.1" height="30.0" rx="0" fill="#000000"/><rect x="976" y="482" width="23.5" height="29.7" rx="0" fill="#000000"/><rect x="1025" y="482" width="23.0" height="29.7" rx="0" fill="#000000"/><rect x="976" y="530" width="23.5" height="29.7" rx="0" fill="#000000"/><rect x="1025" y="530" width="23.0" height="29.7" rx="0" fill="#000000"/><polyline points="1040.0,553.0 1059.5,570.0 1059.5,620.0 1048.0,631.5 1032.0,631.5" fill="none" stroke="#000000" stroke-width="19" stroke-linejoin="round" stroke-linecap="round"/><rect x="960.8" y="588" width="36.6" height="57.0" rx="0" fill="#000000"/><polyline points="990.0,578.0 976.0,586.0 975.0,592.0" fill="none" stroke="#000000" stroke-width="10" stroke-linejoin="round" stroke-linecap="round"/><polyline points="965.7,638.0 965.7,652.0 990.0,680.0 1057.0,682.0" fill="none" stroke="#000000" stroke-width="14" stroke-linejoin="round" stroke-linecap="round"/><polyline points="975.0,638.0 975.0,662.0 982.0,672.0" fill="none" stroke="#000000" stroke-width="8" stroke-linejoin="round" stroke-linecap="round"/><polyline points="984.3,638.0 984.3,655.0 995.0,665.0 1010.0,665.0" fill="none" stroke="#000000" stroke-width="8" stroke-linejoin="round" stroke-linecap="round"/><polyline points="993.3,638.0 995.0,640.0 1012.0,658.0 1022.0,676.0" fill="none" stroke="#000000" stroke-width="8" stroke-linejoin="round" stroke-linecap="round"/><polyline points="958.0,600.0 945.0,612.0 945.0,650.0 970.0,690.0 1058.0,690.0" fill="none" stroke="#000000" stroke-width="9" stroke-linejoin="round" stroke-linecap="round"/><rect x="986" y="573" width="20.0" height="11.0" rx="4" fill="#000000"/><rect x="1042" y="676" width="20.0" height="14.0" rx="5" fill="#000000"/><rect x="911" y="622" width="34.0" height="5.0" rx="0" fill="#000000"/><rect x="911" y="649" width="34.0" height="5.0" rx="0" fill="#000000"/><rect x="912.0" y="623.8" width="10.6" height="28.6" rx="0" fill="#000000"/><rect x="933.4" y="623.8" width="10.7" height="28.6" rx="0" fill="#000000"/><polyline points="920.5,687.0 920.5,716.0" fill="none" stroke="#000000" stroke-width="10" stroke-linejoin="round" stroke-linecap="round"/><rect x="923.7" y="662" width="8.5" height="25.0" rx="0" fill="#000000"/><rect x="914.95" y="664.1" width="9.5" height="7.0" rx="0" fill="#000000"/><rect x="930.85" y="664.1" width="9.5" height="7.0" rx="0" fill="#000000"/><rect x="914.95" y="670.9" width="9.5" height="7.0" rx="0" fill="#000000"/><rect x="930.85" y="670.9" width="9.5" height="7.0" rx="0" fill="#000000"/><rect x="914.95" y="677.7" width="9.5" height="7.0" rx="0" fill="#000000"/><rect x="930.85" y="677.7" width="9.5" height="7.0" rx="0" fill="#000000"/><rect x="946.55" y="669.95" width="8.5" height="8.5" rx="0" fill="#000000"/><rect x="946.55" y="680.55" width="8.5" height="8.5" rx="0" fill="#000000"/><rect x="894" y="678" width="7.5" height="7.0" rx="0" fill="#000000"/><rect x="887.9499999999999" y="677.3" width="7.9" height="8.4" rx="0" fill="#000000"/><rect x="899.8499999999999" y="677.3" width="7.9" height="8.4" rx="0" fill="#000000"/><polyline points="901.0,697.0 899.0,703.0 899.0,716.0" fill="none" stroke="#000000" stroke-width="11" stroke-linejoin="round" stroke-linecap="round"/><rect x="899.8499999999999" y="692.5" width="7.9" height="8.4" rx="0" fill="#000000"/><rect x="926.65" y="695.5" width="8.5" height="9.0" rx="0" fill="#000000"/><rect x="938.55" y="695.5" width="8.5" height="9.0" rx="0" fill="#000000"/><rect x="947.45" y="695.5" width="8.5" height="9.0" rx="0" fill="#000000"/><rect x="958.85" y="695.5" width="8.5" height="9.0" rx="0" fill="#000000"/><rect x="934" y="697" width="5.0" height="6.0" rx="0" fill="#000000"/><rect x="882.5" y="716" width="13.5" height="28.0" rx="0" fill="#000000"/><rect x="934" y="716" width="13.6" height="28.0" rx="0" fill="#000000"/><rect x="882.5" y="716" width="22.5" height="6.0" rx="0" fill="#000000"/><rect x="915" y="700" width="20.0" height="22.0" rx="0" fill="#000000"/><circle cx="904.5" cy="730" r="6" fill="#000000"/><circle cx="925.6" cy="730" r="6" fill="#000000"/></g>
<g><polyline points="771.0,355.5 776.0,355.5" fill="none" stroke="#3b3bf5" stroke-width="3" stroke-linejoin="round"/><polyline points="975.0,352.0 985.0,363.0 992.0,372.0 1027.0,372.0" fill="none" stroke="#3b3bf5" stroke-width="2.5" stroke-linejoin="round"/><polyline points="941.0,390.0 945.0,390.0" fill="none" stroke="#3b3bf5" stroke-width="5" stroke-linejoin="round"/><polyline points="961.0,390.0 965.0,390.0" fill="none" stroke="#3b3bf5" stroke-width="5" stroke-linejoin="round"/><polyline points="1046.0,385.0 1052.0,392.0" fill="none" stroke="#3b3bf5" stroke-width="2.5" stroke-linejoin="round"/><polyline points="1058.0,447.0 1064.0,456.0" fill="none" stroke="#3b3bf5" stroke-width="3" stroke-linejoin="round"/><polyline points="892.0,493.3 958.0,493.3 963.0,490.0" fill="none" stroke="#3b3bf5" stroke-width="2.5" stroke-linejoin="round"/><polyline points="778.4,479.0 842.4,479.0 860.2,500.4" fill="none" stroke="#3b3bf5" stroke-width="3.8" stroke-linejoin="round"/><polyline points="766.6,495.5 776.0,495.5 784.4,503.8 831.8,503.8 844.2,518.0" fill="none" stroke="#3b3bf5" stroke-width="3.8" stroke-linejoin="round"/><polyline points="772.0,504.6 785.5,524.0 814.0,525.0 819.3,534.6" fill="none" stroke="#3b3bf5" stroke-width="3.8" stroke-linejoin="round"/><polyline points="773.0,668.3 777.0,668.3" fill="none" stroke="#3b3bf5" stroke-width="5" stroke-linejoin="round"/><polyline points="762.0,581.5 772.0,581.5" fill="none" stroke="#3b3bf5" stroke-width="2" stroke-linejoin="round"/><polyline points="798.0,668.3 803.0,668.3" fill="none" stroke="#3b3bf5" stroke-width="5" stroke-linejoin="round"/><polyline points="815.0,668.3 820.0,668.3" fill="none" stroke="#3b3bf5" stroke-width="5" stroke-linejoin="round"/><polyline points="852.4,520.0 852.4,600.0" fill="none" stroke="#3b3bf5" stroke-width="3.5" stroke-linejoin="round"/><polyline points="800.0,574.0 818.9,556.0" fill="none" stroke="#3b3bf5" stroke-width="2.5" stroke-linejoin="round"/><polyline points="852.5,603.0 852.5,615.0" fill="none" stroke="#3b3bf5" stroke-width="6" stroke-linejoin="round"/><polyline points="844.0,654.0 849.0,654.0" fill="none" stroke="#3b3bf5" stroke-width="4" stroke-linejoin="round"/><polyline points="835.0,638.0 837.0,631.0" fill="none" stroke="#3b3bf5" stroke-width="3" stroke-linejoin="round"/><polyline points="895.0,577.0 895.0,588.0" fill="none" stroke="#3b3bf5" stroke-width="3" stroke-linejoin="round"/><polyline points="919.0,589.0 938.0,589.0" fill="none" stroke="#3b3bf5" stroke-width="3" stroke-linejoin="round"/><polyline points="904.0,601.0 911.0,601.0" fill="none" stroke="#3b3bf5" stroke-width="5" stroke-linejoin="round"/><polyline points="950.0,589.0 945.0,597.0" fill="none" stroke="#3b3bf5" stroke-width="3" stroke-linejoin="round"/><polyline points="1062.0,490.0 1068.0,496.0" fill="none" stroke="#3b3bf5" stroke-width="3" stroke-linejoin="round"/><polyline points="1030.0,484.0 1037.0,477.0" fill="none" stroke="#3b3bf5" stroke-width="3" stroke-linejoin="round"/><polyline points="964.0,646.0 975.0,660.0 995.0,679.0 1015.0,679.0" fill="none" stroke="#3b3bf5" stroke-width="3" stroke-linejoin="round"/></g>
<g><polyline points="809.5,304.4 809.5,345.0" fill="none" stroke="#ff0000" stroke-width="6" stroke-linejoin="round" stroke-linecap="butt"/><polyline points="845.5,345.0 845.5,331.0 873.0,301.0 950.0,301.0 983.0,334.0" fill="none" stroke="#ff0000" stroke-width="5" stroke-linejoin="round" stroke-linecap="butt"/><polyline points="993.0,334.0 1005.0,346.0 1005.0,360.0" fill="none" stroke="#ff0000" stroke-width="5" stroke-linejoin="round" stroke-linecap="butt"/><polyline points="904.0,323.9 920.0,324.4" fill="none" stroke="#ff0000" stroke-width="5" stroke-linejoin="round" stroke-linecap="butt"/><polyline points="892.0,323.9 886.0,324.0 881.7,329.0 881.7,345.0" fill="none" stroke="#ff0000" stroke-width="5" stroke-linejoin="round" stroke-linecap="butt"/><polyline points="824.8,345.0 824.8,391.0 801.4,414.5 740.0,414.5" fill="none" stroke="#ff0000" stroke-width="2.6" stroke-linejoin="round"/><polyline points="830.2,345.0 830.2,393.2 803.6,419.9 742.0,419.9" fill="none" stroke="#ff0000" stroke-width="2.6" stroke-linejoin="round"/><rect x="824.5" y="350" width="6" height="38" fill="#ff0000"/><polyline points="1023.0,321.0 1023.0,358.0" fill="none" stroke="#ff0000" stroke-width="5" stroke-linejoin="round" stroke-linecap="butt"/><polyline points="945.0,393.0 938.0,396.0 935.5,402.0 935.5,455.0 944.8,465.0" fill="none" stroke="#ff0000" stroke-width="5" stroke-linejoin="round" stroke-linecap="butt"/><polyline points="1049.0,420.5 1058.5,417.4" fill="none" stroke="#ff0000" stroke-width="4" stroke-linejoin="round" stroke-linecap="butt"/><polyline points="1049.0,429.5 1059.0,429.5" fill="none" stroke="#ff0000" stroke-width="4" stroke-linejoin="round" stroke-linecap="butt"/><polyline points="1060.0,440.0 1066.0,450.0 1066.0,455.0 1050.0,462.0 1047.0,464.4" fill="none" stroke="#ff0000" stroke-width="5" stroke-linejoin="round" stroke-linecap="butt"/><polyline points="860.0,490.5 956.0,490.5 974.0,472.5 974.0,468.0" fill="none" stroke="#ff0000" stroke-width="4" stroke-linejoin="round" stroke-linecap="butt"/><polyline points="773.6,462.0 756.0,480.0 757.0,488.6" fill="none" stroke="#ff0000" stroke-width="4.5" stroke-linejoin="round" stroke-linecap="butt"/><polyline points="791.6,454.0 791.6,477.0 770.0,498.5 772.0,504.6" fill="none" stroke="#ff0000" stroke-width="4.5" stroke-linejoin="round" stroke-linecap="butt"/><polyline points="809.5,454.0 809.5,479.5 772.5,518.0 767.0,523.8" fill="none" stroke="#ff0000" stroke-width="5.2" stroke-linejoin="round" stroke-linecap="butt"/><polyline points="827.5,454.0 827.5,480.5 772.5,536.0 767.0,541.5" fill="none" stroke="#ff0000" stroke-width="5.2" stroke-linejoin="round" stroke-linecap="butt"/><polyline points="845.5,454.0 845.5,481.5 772.0,555.5 767.0,560.0" fill="none" stroke="#ff0000" stroke-width="5.2" stroke-linejoin="round" stroke-linecap="butt"/><polyline points="863.6,454.0 863.6,482.6 777.0,570.0 771.0,575.0 767.0,577.7" fill="none" stroke="#ff0000" stroke-width="5.2" stroke-linejoin="round" stroke-linecap="butt"/><polyline points="881.7,454.0 881.7,479.8" fill="none" stroke="#ff0000" stroke-width="4.5" stroke-linejoin="round" stroke-linecap="butt"/><polyline points="860.2,500.4 820.0,540.0 819.3,548.0" fill="none" stroke="#ff0000" stroke-width="4" stroke-linejoin="round" stroke-linecap="butt"/><polyline points="882.0,479.8 882.0,490.0 850.0,522.0 830.0,542.0 829.0,548.0" fill="none" stroke="#ff0000" stroke-width="4" stroke-linejoin="round" stroke-linecap="butt"/><polyline points="767.0,613.8 778.0,611.6 785.0,609.2 813.3,609.2 821.6,611.0" fill="none" stroke="#ff0000" stroke-width="4" stroke-linejoin="round" stroke-linecap="butt"/><polyline points="767.0,631.8 778.0,629.4 789.6,627.0 822.8,627.0 833.5,616.3" fill="none" stroke="#ff0000" stroke-width="4" stroke-linejoin="round" stroke-linecap="butt"/><polyline points="767.0,686.6 789.6,690.0 802.4,680.4 803.7,658.6 810.1,649.7 811.4,640.7 837.0,640.0" fill="none" stroke="#ff0000" stroke-width="4" stroke-linejoin="round" stroke-linecap="butt"/><polyline points="772.0,668.3 784.4,681.7 793.4,672.7 794.7,657.4 810.1,640.7" fill="none" stroke="#ff0000" stroke-width="3" stroke-linejoin="round" stroke-linecap="butt"/><polyline points="806.8,589.7 808.0,600.0 814.0,606.0 826.0,606.0" fill="none" stroke="#ff0000" stroke-width="4" stroke-linejoin="round" stroke-linecap="butt"/><polyline points="806.8,577.8 806.8,570.0 818.9,558.0 818.9,535.2" fill="none" stroke="#ff0000" stroke-width="4" stroke-linejoin="round" stroke-linecap="butt"/><polyline points="833.2,532.7 828.8,540.0 828.8,550.0" fill="none" stroke="#ff0000" stroke-width="4" stroke-linejoin="round" stroke-linecap="butt"/><rect x="816" y="568" width="35" height="12" fill="#ff0000"/><rect x="816" y="598.5" width="35" height="4" fill="#ff0000"/><polyline points="845.0,657.0 866.0,676.0 915.0,676.0" fill="none" stroke="#ff0000" stroke-width="4" stroke-linejoin="round" stroke-linecap="butt"/><polyline points="830.0,660.0 856.0,686.0 912.0,686.0" fill="none" stroke="#ff0000" stroke-width="4" stroke-linejoin="round" stroke-linecap="butt"/><polyline points="873.8,500.0 873.8,545.0" fill="none" stroke="#ff0000" stroke-width="5" stroke-linejoin="round" stroke-linecap="butt"/><rect x="911" y="535" width="29" height="4" fill="#ff0000"/><rect x="1046" y="492" width="20" height="10" rx="5" fill="#ff0000"/><polyline points="1040.0,553.0 1059.5,570.0 1059.5,620.0 1048.0,631.5 1032.0,631.5" fill="none" stroke="#ff0000" stroke-width="13" stroke-linejoin="round" stroke-linecap="butt"/><polyline points="990.0,578.0 976.0,586.0 975.0,592.0" fill="none" stroke="#ff0000" stroke-width="4" stroke-linejoin="round" stroke-linecap="butt"/><polyline points="965.7,638.0 965.7,652.0 990.0,680.0 1057.0,682.0" fill="none" stroke="#ff0000" stroke-width="9" stroke-linejoin="round" stroke-linecap="butt"/><polyline points="975.0,638.0 975.0,662.0 982.0,672.0" fill="none" stroke="#ff0000" stroke-width="3.5" stroke-linejoin="round" stroke-linecap="butt"/><polyline points="984.3,638.0 984.3,655.0 995.0,665.0 1010.0,665.0" fill="none" stroke="#ff0000" stroke-width="3.5" stroke-linejoin="round" stroke-linecap="butt"/><polyline points="993.3,638.0 995.0,640.0 1012.0,658.0 1022.0,676.0" fill="none" stroke="#ff0000" stroke-width="3.5" stroke-linejoin="round" stroke-linecap="butt"/><polyline points="958.0,600.0 945.0,612.0 945.0,650.0 970.0,690.0 1058.0,690.0" fill="none" stroke="#ff0000" stroke-width="4" stroke-linejoin="round" stroke-linecap="butt"/><polyline points="920.5,687.0 920.5,716.0" fill="none" stroke="#ff0000" stroke-width="4" stroke-linejoin="round" stroke-linecap="butt"/><polyline points="901.0,697.0 899.0,703.0 899.0,716.0" fill="none" stroke="#ff0000" stroke-width="4.5" stroke-linejoin="round" stroke-linecap="butt"/><rect x="884" y="728" width="10" height="4" fill="#ff0000"/><rect x="936" y="728" width="10" height="4" fill="#ff0000"/></g>
<g><polyline points="822.8,389.0 826.3,389.0" fill="none" stroke="#3b3bf5" stroke-width="4"/><polyline points="829.3,389.0 832.9,389.0" fill="none" stroke="#3b3bf5" stroke-width="4"/><polyline points="753.5,412.5 753.5,416.0" fill="none" stroke="#3b3bf5" stroke-width="5"/><polyline points="753.5,418.5 753.5,422.0" fill="none" stroke="#3b3bf5" stroke-width="5"/><polyline points="804.0,301.5 807.0,301.5" fill="none" stroke="#3b3bf5" stroke-width="5"/><polyline points="760.5,470.5 765.0,475.0" fill="none" stroke="#3b3bf5" stroke-width="3.5"/><polyline points="767.0,477.0 771.0,481.0" fill="none" stroke="#3b3bf5" stroke-width="3.5"/><polyline points="977.0,493.0 980.0,493.0" fill="none" stroke="#3b3bf5" stroke-width="4"/><polyline points="996.0,493.0 999.0,493.0" fill="none" stroke="#3b3bf5" stroke-width="4"/></g>
<g><circle cx="756.2" cy="299.4" r="18.6" fill="none" stroke="#c05050" stroke-width="0.8" stroke-dasharray="1 1"/><circle cx="756.2" cy="299.4" r="17.6" fill="#e39ee3" stroke="#7ad0f0" stroke-width="0.8"/><circle cx="756.9" cy="723.4" r="18.6" fill="none" stroke="#c05050" stroke-width="0.8" stroke-dasharray="1 1"/><circle cx="756.9" cy="723.4" r="17.6" fill="#e39ee3" stroke="#7ad0f0" stroke-width="0.8"/><rect x="767.4" y="334.7" width="12.4" height="21.0" rx="6.2" fill="#e39ee3"/><rect x="785.4" y="334.7" width="12.4" height="21.0" rx="6.2" fill="#e39ee3"/><rect x="803.3" y="334.7" width="12.4" height="21.0" rx="6.2" fill="#e39ee3"/><rect x="821.3" y="334.7" width="12.4" height="21.0" rx="6.2" fill="#e39ee3"/><rect x="839.3" y="334.7" width="12.4" height="21.0" rx="6.2" fill="#e39ee3"/><rect x="857.4" y="334.7" width="12.4" height="21.0" rx="6.2" fill="#e39ee3"/><rect x="875.5" y="334.7" width="12.4" height="21.0" rx="6.2" fill="#e39ee3"/><rect x="889.5" y="320.6" width="5.0" height="6.5" rx="0" fill="#e39ee3"/><rect x="901.5" y="320.6" width="5.0" height="6.5" rx="0" fill="#e39ee3"/><rect x="1009.5" y="303.0" width="6.5" height="15.0" rx="0" fill="#e39ee3"/><rect x="1030.5" y="303.0" width="6.5" height="15.0" rx="0" fill="#e39ee3"/><rect x="1019.5" y="317.5" width="7.0" height="7.5" rx="0" fill="#e39ee3"/><rect x="979.5" y="330.8" width="5.0" height="6.5" rx="0" fill="#e39ee3"/><rect x="991.0" y="330.8" width="5.0" height="6.5" rx="0" fill="#e39ee3"/><rect x="965.9" y="355.8" width="6.9" height="17.8" rx="0" fill="#e39ee3"/><rect x="943.2" y="379.0" width="18.8" height="5.9" rx="0" fill="#e39ee3"/><rect x="1031.0" y="379.0" width="18.1" height="5.9" rx="0" fill="#e39ee3"/><rect x="966.4" y="443.6" width="6.9" height="17.7" rx="0" fill="#e39ee3"/><rect x="974.8" y="355.8" width="6.9" height="17.8" rx="0" fill="#e39ee3"/><rect x="943.2" y="387.9" width="18.8" height="5.9" rx="0" fill="#e39ee3"/><rect x="1031.0" y="387.9" width="18.1" height="5.9" rx="0" fill="#e39ee3"/><rect x="975.3" y="443.6" width="6.9" height="17.7" rx="0" fill="#e39ee3"/><rect x="983.7" y="355.8" width="6.9" height="17.8" rx="0" fill="#e39ee3"/><rect x="943.2" y="396.8" width="18.8" height="5.9" rx="0" fill="#e39ee3"/><rect x="1031.0" y="396.8" width="18.1" height="5.9" rx="0" fill="#e39ee3"/><rect x="984.2" y="443.6" width="6.9" height="17.7" rx="0" fill="#e39ee3"/><rect x="992.6" y="355.8" width="6.9" height="17.8" rx="0" fill="#e39ee3"/><rect x="943.2" y="405.7" width="18.8" height="5.9" rx="0" fill="#e39ee3"/><rect x="1031.0" y="405.7" width="18.1" height="5.9" rx="0" fill="#e39ee3"/><rect x="993.1" y="443.6" width="6.9" height="17.7" rx="0" fill="#e39ee3"/><rect x="1001.5" y="355.8" width="6.9" height="17.8" rx="0" fill="#e39ee3"/><rect x="943.2" y="414.6" width="18.8" height="5.9" rx="0" fill="#e39ee3"/><rect x="1031.0" y="414.6" width="18.1" height="5.9" rx="0" fill="#e39ee3"/><rect x="1002.0" y="443.6" width="6.9" height="17.7" rx="0" fill="#e39ee3"/><rect x="1010.4" y="355.8" width="6.9" height="17.8" rx="0" fill="#e39ee3"/><rect x="943.2" y="423.5" width="18.8" height="5.9" rx="0" fill="#e39ee3"/><rect x="1031.0" y="423.5" width="18.1" height="5.9" rx="0" fill="#e39ee3"/><rect x="1010.9" y="443.6" width="6.9" height="17.7" rx="0" fill="#e39ee3"/><rect x="1019.3" y="355.8" width="6.9" height="17.8" rx="0" fill="#e39ee3"/><rect x="943.2" y="432.4" width="18.8" height="5.9" rx="0" fill="#e39ee3"/><rect x="1031.0" y="432.4" width="18.1" height="5.9" rx="0" fill="#e39ee3"/><rect x="1019.8" y="443.6" width="6.9" height="17.7" rx="0" fill="#e39ee3"/><rect x="1057.2" y="424.0" width="5.5" height="5.0" rx="0" fill="#e39ee3"/><rect x="1057.2" y="435.0" width="5.5" height="5.0" rx="0" fill="#e39ee3"/><rect x="912.1" y="446.9" width="4.5" height="5.0" rx="0" fill="#e39ee3"/><rect x="919.8" y="446.9" width="4.5" height="5.0" rx="0" fill="#e39ee3"/><circle cx="912.3" cy="465.3" r="7.2" fill="#e39ee3"/><circle cx="944.8" cy="465.3" r="7.2" fill="#e39ee3"/><circle cx="912.3" cy="511.3" r="7.2" fill="#e39ee3"/><circle cx="944.8" cy="511.3" r="7.2" fill="#e39ee3"/><rect x="966.0" y="465.4" width="5.0" height="6.0" rx="0" fill="#e39ee3"/><rect x="977.5" y="465.4" width="5.0" height="6.0" rx="0" fill="#e39ee3"/><rect x="767.3" y="443.7" width="12.2" height="20.7" rx="0" fill="#e39ee3"/><rect x="785.4" y="443.3" width="12.4" height="21.0" rx="6.2" fill="#e39ee3"/><rect x="803.3" y="443.3" width="12.4" height="21.0" rx="6.2" fill="#e39ee3"/><rect x="821.3" y="443.3" width="12.4" height="21.0" rx="6.2" fill="#e39ee3"/><rect x="839.3" y="443.3" width="12.4" height="21.0" rx="6.2" fill="#e39ee3"/><rect x="857.4" y="443.3" width="12.4" height="21.0" rx="6.2" fill="#e39ee3"/><rect x="875.5" y="443.3" width="12.4" height="21.0" rx="6.2" fill="#e39ee3"/><rect x="761.5" y="518.2" width="11.5" height="11.4" rx="0" fill="#e39ee3"/><circle cx="767" cy="541.8" r="6.2" fill="#e39ee3"/><circle cx="767" cy="559.8" r="6.2" fill="#e39ee3"/><circle cx="767" cy="577.8" r="6.2" fill="#e39ee3"/><circle cx="767" cy="595.8" r="6.2" fill="#e39ee3"/><circle cx="767" cy="613.8" r="6.2" fill="#e39ee3"/><circle cx="767" cy="631.8" r="6.2" fill="#e39ee3"/><circle cx="767" cy="649.8" r="6.2" fill="#e39ee3"/><circle cx="767" cy="667.8" r="6.2" fill="#e39ee3"/><circle cx="767" cy="685.8" r="6.2" fill="#e39ee3"/><rect x="817.1" y="546.5" width="4.6" height="13.9" rx="0" fill="#e39ee3"/><rect x="817.1" y="583.0" width="4.6" height="13.9" rx="0" fill="#e39ee3"/><rect x="825.9" y="546.5" width="4.6" height="13.9" rx="0" fill="#e39ee3"/><rect x="825.9" y="583.0" width="4.6" height="13.9" rx="0" fill="#e39ee3"/><rect x="834.7" y="546.5" width="4.6" height="13.9" rx="0" fill="#e39ee3"/><rect x="834.7" y="583.0" width="4.6" height="13.9" rx="0" fill="#e39ee3"/><rect x="844.7" y="546.5" width="4.6" height="13.9" rx="0" fill="#e39ee3"/><rect x="844.7" y="583.0" width="4.6" height="13.9" rx="0" fill="#e39ee3"/><rect x="804.0" y="575.5" width="5.5" height="5.0" rx="0" fill="#e39ee3"/><rect x="804.0" y="586.8" width="5.5" height="5.0" rx="0" fill="#e39ee3"/><rect x="858.1" y="575.2" width="5.5" height="5.5" rx="0" fill="#e39ee3"/><rect x="858.1" y="585.9" width="5.5" height="5.5" rx="0" fill="#e39ee3"/><rect x="818.9" y="608.0" width="5.5" height="6.0" rx="0" fill="#e39ee3"/><rect x="830.8" y="608.0" width="5.5" height="6.0" rx="0" fill="#e39ee3"/><rect x="849.8" y="605.8" width="5.5" height="6.5" rx="0" fill="#e39ee3"/><rect x="861.2" y="605.8" width="5.5" height="6.5" rx="0" fill="#e39ee3"/><rect x="820.6" y="641.5" width="5.5" height="5.5" rx="0" fill="#e39ee3"/><rect x="820.6" y="652.1" width="5.5" height="5.5" rx="0" fill="#e39ee3"/><rect x="838.8" y="633.0" width="18.4" height="23.6" rx="0" fill="#e39ee3"/><rect x="887.8" y="633.0" width="17.4" height="23.6" rx="0" fill="#e39ee3"/><rect x="871.0" y="502.1" width="5.5" height="5.0" rx="0" fill="#e39ee3"/><rect x="882.2" y="502.1" width="5.5" height="5.0" rx="0" fill="#e39ee3"/><rect x="871.0" y="515.3" width="5.5" height="5.0" rx="0" fill="#e39ee3"/><rect x="882.2" y="515.3" width="5.5" height="5.0" rx="0" fill="#e39ee3"/><rect x="871.0" y="529.5" width="5.5" height="5.0" rx="0" fill="#e39ee3"/><rect x="871.0" y="536.1" width="5.5" height="5.0" rx="0" fill="#e39ee3"/><rect x="871.0" y="543.2" width="5.5" height="5.0" rx="0" fill="#e39ee3"/><rect x="887.0" y="529.5" width="5.5" height="5.0" rx="0" fill="#e39ee3"/><rect x="887.0" y="543.2" width="5.5" height="5.0" rx="0" fill="#e39ee3"/><rect x="871.0" y="556.2" width="5.5" height="5.0" rx="0" fill="#e39ee3"/><rect x="882.8" y="556.2" width="5.5" height="5.0" rx="0" fill="#e39ee3"/><rect x="846.3" y="533.8" width="5.0" height="5.0" rx="0" fill="#e39ee3"/><rect x="858.3" y="533.8" width="5.0" height="5.0" rx="0" fill="#e39ee3"/><rect x="891.0" y="567.2" width="5.5" height="5.5" rx="0" fill="#e39ee3"/><rect x="903.0" y="567.2" width="5.5" height="5.5" rx="0" fill="#e39ee3"/><rect x="891.0" y="578.5" width="5.5" height="5.5" rx="0" fill="#e39ee3"/><rect x="903.0" y="578.5" width="5.5" height="5.5" rx="0" fill="#e39ee3"/><rect x="911.9" y="522.3" width="26.7" height="7.2" rx="0" fill="#e39ee3"/><rect x="911.9" y="543.7" width="26.7" height="7.1" rx="0" fill="#e39ee3"/><rect x="903.0" y="542.4" width="5.5" height="5.5" rx="0" fill="#e39ee3"/><rect x="903.0" y="554.8" width="5.5" height="5.5" rx="0" fill="#e39ee3"/><rect x="917.1" y="563.0" width="4.4" height="7.0" rx="0" fill="#e39ee3"/><rect x="924.0" y="563.0" width="4.4" height="7.0" rx="0" fill="#e39ee3"/><rect x="930.7" y="563.0" width="4.4" height="7.0" rx="0" fill="#e39ee3"/><rect x="917.1" y="578.0" width="4.4" height="7.0" rx="0" fill="#e39ee3"/><rect x="930.7" y="578.0" width="4.4" height="7.0" rx="0" fill="#e39ee3"/><rect x="940.2" y="567.2" width="5.5" height="5.5" rx="0" fill="#e39ee3"/><rect x="940.2" y="578.5" width="5.5" height="5.5" rx="0" fill="#e39ee3"/><rect x="930.5" y="588.2" width="5.5" height="5.5" rx="0" fill="#e39ee3"/><rect x="940.2" y="588.2" width="5.5" height="5.5" rx="0" fill="#e39ee3"/><rect x="930.5" y="599.9" width="5.5" height="5.5" rx="0" fill="#e39ee3"/><rect x="940.2" y="599.9" width="5.5" height="5.5" rx="0" fill="#e39ee3"/><rect x="954.6" y="567.0" width="5.5" height="5.5" rx="0" fill="#e39ee3"/><rect x="965.6" y="567.0" width="5.5" height="5.5" rx="0" fill="#e39ee3"/><rect x="954.6" y="576.0" width="5.5" height="5.5" rx="0" fill="#e39ee3"/><rect x="965.6" y="576.0" width="5.5" height="5.5" rx="0" fill="#e39ee3"/><rect x="978.9" y="485.0" width="17.7" height="23.7" rx="0" fill="#e39ee3"/><rect x="1028.0" y="485.0" width="17.2" height="23.7" rx="0" fill="#e39ee3"/><rect x="978.9" y="533.0" width="17.7" height="23.7" rx="0" fill="#e39ee3"/><rect x="1028.0" y="533.0" width="17.2" height="23.7" rx="0" fill="#e39ee3"/><circle cx="1036" cy="596" r="6.5" fill="#e39ee3"/><rect x="1031.0" y="625.5" width="12.0" height="12.0" rx="0" fill="#e39ee3"/><rect x="963.7" y="590.4" width="4.0" height="9.6" rx="0" fill="#e39ee3"/><rect x="963.7" y="629.0" width="4.0" height="9.8" rx="0" fill="#e39ee3"/><rect x="973.0" y="590.4" width="4.0" height="9.6" rx="0" fill="#e39ee3"/><rect x="973.0" y="629.0" width="4.0" height="9.8" rx="0" fill="#e39ee3"/><rect x="982.3" y="590.4" width="4.0" height="9.6" rx="0" fill="#e39ee3"/><rect x="982.3" y="629.0" width="4.0" height="9.8" rx="0" fill="#e39ee3"/><rect x="991.3" y="590.4" width="4.0" height="9.6" rx="0" fill="#e39ee3"/><rect x="991.3" y="629.0" width="4.0" height="9.8" rx="0" fill="#e39ee3"/><rect x="965.0" y="603.5" width="29.7" height="21.5" rx="0" fill="#e39ee3"/><rect x="987.8" y="575.8" width="5.5" height="5.5" rx="0" fill="#e39ee3"/><rect x="998.9" y="575.8" width="5.5" height="5.5" rx="0" fill="#e39ee3"/><rect x="968.5" y="655.0" width="5.0" height="6.0" rx="0" fill="#e39ee3"/><rect x="968.5" y="665.0" width="5.0" height="6.0" rx="0" fill="#e39ee3"/><rect x="983.5" y="655.0" width="5.0" height="6.0" rx="0" fill="#e39ee3"/><rect x="983.5" y="665.0" width="5.0" height="6.0" rx="0" fill="#e39ee3"/><rect x="1044.0" y="678.0" width="14.0" height="9.0" rx="0" fill="#e39ee3"/><circle cx="1050" cy="697" r="5.2" fill="#e39ee3"/><rect x="913.2" y="625.0" width="8.2" height="26.2" rx="0" fill="#e39ee3"/><rect x="934.6" y="625.0" width="8.3" height="26.2" rx="0" fill="#e39ee3"/><rect x="916.5" y="665.6" width="6.5" height="4.0" rx="0" fill="#e39ee3"/><rect x="932.4" y="665.6" width="6.5" height="4.0" rx="0" fill="#e39ee3"/><rect x="916.5" y="672.4" width="6.5" height="4.0" rx="0" fill="#e39ee3"/><rect x="932.4" y="672.4" width="6.5" height="4.0" rx="0" fill="#e39ee3"/><rect x="916.5" y="679.2" width="6.5" height="4.0" rx="0" fill="#e39ee3"/><rect x="932.4" y="679.2" width="6.5" height="4.0" rx="0" fill="#e39ee3"/><rect x="948.0" y="671.5" width="5.5" height="5.5" rx="0" fill="#e39ee3"/><rect x="948.0" y="682.0" width="5.5" height="5.5" rx="0" fill="#e39ee3"/><rect x="889.1" y="678.5" width="5.5" height="6.0" rx="0" fill="#e39ee3"/><rect x="901.0" y="678.5" width="5.5" height="6.0" rx="0" fill="#e39ee3"/><rect x="889.1" y="693.7" width="5.5" height="6.0" rx="0" fill="#e39ee3"/><rect x="901.0" y="693.7" width="5.5" height="6.0" rx="0" fill="#e39ee3"/><rect x="928.1" y="697.0" width="5.5" height="6.0" rx="0" fill="#e39ee3"/><rect x="940.0" y="697.0" width="5.5" height="6.0" rx="0" fill="#e39ee3"/><rect x="949.0" y="697.0" width="5.5" height="6.0" rx="0" fill="#e39ee3"/><rect x="960.4" y="697.0" width="5.5" height="6.0" rx="0" fill="#e39ee3"/><rect x="885.5" y="719.5" width="7.0" height="6.0" rx="0" fill="#e39ee3"/><rect x="885.5" y="735.0" width="7.0" height="6.0" rx="0" fill="#e39ee3"/><rect x="937.5" y="719.5" width="7.0" height="6.0" rx="0" fill="#e39ee3"/><rect x="937.5" y="735.0" width="7.0" height="6.0" rx="0" fill="#e39ee3"/><rect x="896.6" y="712.6" width="4.6" height="10.8" rx="0" fill="#e39ee3"/><rect x="918.1" y="712.6" width="4.6" height="10.8" rx="0" fill="#e39ee3"/><rect x="928.4" y="712.6" width="4.6" height="10.8" rx="0" fill="#e39ee3"/></g>
<g><circle cx="756.2" cy="299.4" r="8.8" fill="#151515" stroke="#2fb04a" stroke-width="2.8"/><circle cx="756.9" cy="723.4" r="8.8" fill="#151515" stroke="#2fb04a" stroke-width="2.8"/><circle cx="827.5" cy="345.2" r="3.9" fill="#e00000" stroke="#2fb04a" stroke-width="2.6"/><circle cx="845.5" cy="345.2" r="3.9" fill="#e00000" stroke="#2fb04a" stroke-width="2.6"/><circle cx="863.6" cy="345.2" r="3.9" fill="#111" stroke="#2fb04a" stroke-width="2.6"/><circle cx="881.7" cy="345.2" r="3.9" fill="#e00000" stroke="#2fb04a" stroke-width="2.6"/><circle cx="773.6" cy="345.2" r="3.9" fill="none" stroke="#2fb04a" stroke-width="2.6"/><circle cx="791.6" cy="345.2" r="3.9" fill="none" stroke="#2fb04a" stroke-width="2.6"/><circle cx="809.5" cy="345.2" r="3.9" fill="none" stroke="#2fb04a" stroke-width="2.6"/><text x="867.8" y="294.5" font-size="12.3" fill="#24e2e2" stroke="#24e2e2" stroke-width="0.3" letter-spacing="-0.2">GREEN DOT 2040E5</text><circle cx="912.3" cy="465.3" r="5.6" fill="#2fb04a"/><circle cx="944.8" cy="465.3" r="5.6" fill="#2fb04a"/><circle cx="912.3" cy="511.3" r="5.6" fill="#2fb04a"/><circle cx="944.8" cy="511.3" r="5.6" fill="#2fb04a"/><circle cx="773.6" cy="453.8" r="3.9" fill="#e00000" stroke="#2fb04a" stroke-width="2.6"/><circle cx="791.6" cy="453.8" r="3.9" fill="#e00000" stroke="#2fb04a" stroke-width="2.6"/><circle cx="809.5" cy="453.8" r="3.9" fill="#e00000" stroke="#2fb04a" stroke-width="2.6"/><circle cx="827.5" cy="453.8" r="3.9" fill="#e00000" stroke="#2fb04a" stroke-width="2.6"/><circle cx="845.5" cy="453.8" r="3.9" fill="#e00000" stroke="#2fb04a" stroke-width="2.6"/><circle cx="863.6" cy="453.8" r="3.9" fill="#e00000" stroke="#2fb04a" stroke-width="2.6"/><circle cx="881.7" cy="453.8" r="3.9" fill="#e00000" stroke="#2fb04a" stroke-width="2.6"/><circle cx="767" cy="523.8" r="3.9" fill="#e00000" stroke="#2fb04a" stroke-width="2.6"/><circle cx="767" cy="541.8" r="3.9" fill="#e00000" stroke="#2fb04a" stroke-width="2.6"/><circle cx="767" cy="559.8" r="3.9" fill="#e00000" stroke="#2fb04a" stroke-width="2.6"/><circle cx="767" cy="577.8" r="3.9" fill="#e00000" stroke="#2fb04a" stroke-width="2.6"/><circle cx="767" cy="595.8" r="3.9" fill="#222" stroke="#2fb04a" stroke-width="3.2"/><circle cx="767" cy="613.8" r="3.9" fill="#e00000" stroke="#2fb04a" stroke-width="2.6"/><circle cx="767" cy="631.8" r="3.9" fill="#e00000" stroke="#2fb04a" stroke-width="2.6"/><circle cx="767" cy="649.8" r="3.9" fill="#222" stroke="#2fb04a" stroke-width="3.2"/><circle cx="767" cy="667.8" r="3.9" fill="#3030e0" stroke="#2fb04a" stroke-width="2.6"/><circle cx="767" cy="685.8" r="3.9" fill="#e00000" stroke="#2fb04a" stroke-width="2.6"/><circle cx="1036" cy="596" r="5.8" fill="#2fb04a"/><circle cx="1037" cy="631.5" r="5.2" fill="#2fb04a"/><circle cx="1050" cy="682.5" r="3.6" fill="#e00000" stroke="#2fb04a" stroke-width="2.6"/><circle cx="1050" cy="697" r="3.6" fill="#e00000" stroke="#2fb04a" stroke-width="2.6"/><circle cx="904.5" cy="730" r="3.4" fill="#e00000" stroke="#2fb04a" stroke-width="2.8"/><circle cx="925.6" cy="730" r="3.4" fill="#e00000" stroke="#2fb04a" stroke-width="2.8"/></g>
<g><circle cx="787.5" cy="294.5" r="3.6" fill="#b9b9b9"/><circle cx="787.5" cy="294.5" r="0.8" fill="#7fb07f"/><circle cx="816.0" cy="294.5" r="3.6" fill="#b9b9b9"/><circle cx="816.0" cy="294.5" r="0.8" fill="#7fb07f"/><circle cx="844.5" cy="294.5" r="3.6" fill="#b9b9b9"/><circle cx="844.5" cy="294.5" r="0.8" fill="#7fb07f"/><circle cx="958.5" cy="294.5" r="3.6" fill="#b9b9b9"/><circle cx="958.5" cy="294.5" r="0.8" fill="#7fb07f"/><circle cx="987.0" cy="294.5" r="3.6" fill="#b9b9b9"/><circle cx="987.0" cy="294.5" r="0.8" fill="#7fb07f"/><circle cx="1015.5" cy="294.5" r="3.6" fill="#b9b9b9"/><circle cx="1015.5" cy="294.5" r="0.8" fill="#7fb07f"/><circle cx="1044.0" cy="294.5" r="3.6" fill="#b9b9b9"/><circle cx="1044.0" cy="294.5" r="0.8" fill="#7fb07f"/><circle cx="1072.5" cy="294.5" r="3.6" fill="#b9b9b9"/><circle cx="1072.5" cy="294.5" r="0.8" fill="#7fb07f"/><circle cx="759.0" cy="323.0" r="3.6" fill="#b9b9b9"/><circle cx="759.0" cy="323.0" r="0.8" fill="#7fb07f"/><circle cx="787.5" cy="323.0" r="3.6" fill="#b9b9b9"/><circle cx="787.5" cy="323.0" r="0.8" fill="#7fb07f"/><circle cx="873.0" cy="323.0" r="3.6" fill="#b9b9b9"/><circle cx="873.0" cy="323.0" r="0.8" fill="#7fb07f"/><circle cx="987.0" cy="323.0" r="3.6" fill="#b9b9b9"/><circle cx="987.0" cy="323.0" r="0.8" fill="#7fb07f"/><circle cx="1044.0" cy="323.0" r="3.6" fill="#b9b9b9"/><circle cx="1044.0" cy="323.0" r="0.8" fill="#7fb07f"/><circle cx="1072.5" cy="323.0" r="3.6" fill="#b9b9b9"/><circle cx="1072.5" cy="323.0" r="0.8" fill="#7fb07f"/><circle cx="901.5" cy="351.5" r="3.6" fill="#b9b9b9"/><circle cx="901.5" cy="351.5" r="0.8" fill="#7fb07f"/><circle cx="930.0" cy="351.5" r="3.6" fill="#b9b9b9"/><circle cx="930.0" cy="351.5" r="0.8" fill="#7fb07f"/><circle cx="958.5" cy="351.5" r="3.6" fill="#b9b9b9"/><circle cx="958.5" cy="351.5" r="0.8" fill="#7fb07f"/><circle cx="1044.0" cy="351.5" r="3.6" fill="#b9b9b9"/><circle cx="1044.0" cy="351.5" r="0.8" fill="#7fb07f"/><circle cx="1072.5" cy="351.5" r="3.6" fill="#b9b9b9"/><circle cx="1072.5" cy="351.5" r="0.8" fill="#7fb07f"/><circle cx="816.0" cy="380.0" r="3.6" fill="#b9b9b9"/><circle cx="816.0" cy="380.0" r="0.8" fill="#7fb07f"/><circle cx="844.5" cy="380.0" r="3.6" fill="#b9b9b9"/><circle cx="844.5" cy="380.0" r="0.8" fill="#7fb07f"/><circle cx="873.0" cy="380.0" r="3.6" fill="#b9b9b9"/><circle cx="873.0" cy="380.0" r="0.8" fill="#7fb07f"/><circle cx="901.5" cy="380.0" r="3.6" fill="#b9b9b9"/><circle cx="901.5" cy="380.0" r="0.8" fill="#7fb07f"/><circle cx="930.0" cy="380.0" r="3.6" fill="#b9b9b9"/><circle cx="930.0" cy="380.0" r="0.8" fill="#7fb07f"/><circle cx="987.0" cy="380.0" r="3.6" fill="#b9b9b9"/><circle cx="987.0" cy="380.0" r="0.8" fill="#7fb07f"/><circle cx="1015.5" cy="380.0" r="3.6" fill="#b9b9b9"/><circle cx="1015.5" cy="380.0" r="0.8" fill="#7fb07f"/><circle cx="1072.5" cy="380.0" r="3.6" fill="#b9b9b9"/><circle cx="1072.5" cy="380.0" r="0.8" fill="#7fb07f"/><circle cx="787.5" cy="408.5" r="3.6" fill="#b9b9b9"/><circle cx="787.5" cy="408.5" r="0.8" fill="#7fb07f"/><circle cx="844.5" cy="408.5" r="3.6" fill="#b9b9b9"/><circle cx="844.5" cy="408.5" r="0.8" fill="#7fb07f"/><circle cx="873.0" cy="408.5" r="3.6" fill="#b9b9b9"/><circle cx="873.0" cy="408.5" r="0.8" fill="#7fb07f"/><circle cx="901.5" cy="408.5" r="3.6" fill="#b9b9b9"/><circle cx="901.5" cy="408.5" r="0.8" fill="#7fb07f"/><circle cx="987.0" cy="408.5" r="3.6" fill="#b9b9b9"/><circle cx="987.0" cy="408.5" r="0.8" fill="#7fb07f"/><circle cx="1072.5" cy="408.5" r="3.6" fill="#b9b9b9"/><circle cx="1072.5" cy="408.5" r="0.8" fill="#7fb07f"/><circle cx="759.0" cy="437.0" r="3.6" fill="#b9b9b9"/><circle cx="759.0" cy="437.0" r="0.8" fill="#7fb07f"/><circle cx="787.5" cy="437.0" r="3.6" fill="#b9b9b9"/><circle cx="787.5" cy="437.0" r="0.8" fill="#7fb07f"/><circle cx="816.0" cy="437.0" r="3.6" fill="#b9b9b9"/><circle cx="816.0" cy="437.0" r="0.8" fill="#7fb07f"/><circle cx="844.5" cy="437.0" r="3.6" fill="#b9b9b9"/><circle cx="844.5" cy="437.0" r="0.8" fill="#7fb07f"/><circle cx="873.0" cy="437.0" r="3.6" fill="#b9b9b9"/><circle cx="873.0" cy="437.0" r="0.8" fill="#7fb07f"/><circle cx="901.5" cy="437.0" r="3.6" fill="#b9b9b9"/><circle cx="901.5" cy="437.0" r="0.8" fill="#7fb07f"/><circle cx="987.0" cy="437.0" r="3.6" fill="#b9b9b9"/><circle cx="987.0" cy="437.0" r="0.8" fill="#7fb07f"/><circle cx="1015.5" cy="437.0" r="3.6" fill="#b9b9b9"/><circle cx="1015.5" cy="437.0" r="0.8" fill="#7fb07f"/><circle cx="1072.5" cy="437.0" r="3.6" fill="#b9b9b9"/><circle cx="1072.5" cy="437.0" r="0.8" fill="#7fb07f"/><circle cx="930.0" cy="465.5" r="3.6" fill="#b9b9b9"/><circle cx="930.0" cy="465.5" r="0.8" fill="#7fb07f"/><circle cx="958.5" cy="465.5" r="3.6" fill="#b9b9b9"/><circle cx="958.5" cy="465.5" r="0.8" fill="#7fb07f"/><circle cx="901.5" cy="522.5" r="3.6" fill="#b9b9b9"/><circle cx="901.5" cy="522.5" r="0.8" fill="#7fb07f"/><circle cx="958.5" cy="522.5" r="3.6" fill="#b9b9b9"/><circle cx="958.5" cy="522.5" r="0.8" fill="#7fb07f"/><circle cx="1015.5" cy="522.5" r="3.6" fill="#b9b9b9"/><circle cx="1015.5" cy="522.5" r="0.8" fill="#7fb07f"/><circle cx="1044.0" cy="522.5" r="3.6" fill="#b9b9b9"/><circle cx="1044.0" cy="522.5" r="0.8" fill="#7fb07f"/><circle cx="1072.5" cy="522.5" r="3.6" fill="#b9b9b9"/><circle cx="1072.5" cy="522.5" r="0.8" fill="#7fb07f"/><circle cx="958.5" cy="551.0" r="3.6" fill="#b9b9b9"/><circle cx="958.5" cy="551.0" r="0.8" fill="#7fb07f"/><circle cx="1015.5" cy="551.0" r="3.6" fill="#b9b9b9"/><circle cx="1015.5" cy="551.0" r="0.8" fill="#7fb07f"/><circle cx="1072.5" cy="551.0" r="3.6" fill="#b9b9b9"/><circle cx="1072.5" cy="551.0" r="0.8" fill="#7fb07f"/><circle cx="787.5" cy="579.5" r="3.6" fill="#b9b9b9"/><circle cx="787.5" cy="579.5" r="0.8" fill="#7fb07f"/><circle cx="873.0" cy="579.5" r="3.6" fill="#b9b9b9"/><circle cx="873.0" cy="579.5" r="0.8" fill="#7fb07f"/><circle cx="1015.5" cy="579.5" r="3.6" fill="#b9b9b9"/><circle cx="1015.5" cy="579.5" r="0.8" fill="#7fb07f"/><circle cx="1044.0" cy="579.5" r="3.6" fill="#b9b9b9"/><circle cx="1044.0" cy="579.5" r="0.8" fill="#7fb07f"/><circle cx="1072.5" cy="579.5" r="3.6" fill="#b9b9b9"/><circle cx="1072.5" cy="579.5" r="0.8" fill="#7fb07f"/><circle cx="873.0" cy="608.0" r="3.6" fill="#b9b9b9"/><circle cx="873.0" cy="608.0" r="0.8" fill="#7fb07f"/><circle cx="1015.5" cy="608.0" r="3.6" fill="#b9b9b9"/><circle cx="1015.5" cy="608.0" r="0.8" fill="#7fb07f"/><circle cx="1044.0" cy="608.0" r="3.6" fill="#b9b9b9"/><circle cx="1044.0" cy="608.0" r="0.8" fill="#7fb07f"/><circle cx="1072.5" cy="608.0" r="3.6" fill="#b9b9b9"/><circle cx="1072.5" cy="608.0" r="0.8" fill="#7fb07f"/><circle cx="873.0" cy="636.5" r="3.6" fill="#b9b9b9"/><circle cx="873.0" cy="636.5" r="0.8" fill="#7fb07f"/><circle cx="1015.5" cy="636.5" r="3.6" fill="#b9b9b9"/><circle cx="1015.5" cy="636.5" r="0.8" fill="#7fb07f"/><circle cx="1072.5" cy="636.5" r="3.6" fill="#b9b9b9"/><circle cx="1072.5" cy="636.5" r="0.8" fill="#7fb07f"/><circle cx="873.0" cy="665.0" r="3.6" fill="#b9b9b9"/><circle cx="873.0" cy="665.0" r="0.8" fill="#7fb07f"/><circle cx="901.5" cy="665.0" r="3.6" fill="#b9b9b9"/><circle cx="901.5" cy="665.0" r="0.8" fill="#7fb07f"/><circle cx="1044.0" cy="665.0" r="3.6" fill="#b9b9b9"/><circle cx="1044.0" cy="665.0" r="0.8" fill="#7fb07f"/><circle cx="1072.5" cy="665.0" r="3.6" fill="#b9b9b9"/><circle cx="1072.5" cy="665.0" r="0.8" fill="#7fb07f"/><circle cx="816.0" cy="693.5" r="3.6" fill="#b9b9b9"/><circle cx="816.0" cy="693.5" r="0.8" fill="#7fb07f"/><circle cx="844.5" cy="693.5" r="3.6" fill="#b9b9b9"/><circle cx="844.5" cy="693.5" r="0.8" fill="#7fb07f"/><circle cx="873.0" cy="693.5" r="3.6" fill="#b9b9b9"/><circle cx="873.0" cy="693.5" r="0.8" fill="#7fb07f"/><circle cx="958.5" cy="693.5" r="3.6" fill="#b9b9b9"/><circle cx="958.5" cy="693.5" r="0.8" fill="#7fb07f"/><circle cx="987.0" cy="693.5" r="3.6" fill="#b9b9b9"/><circle cx="987.0" cy="693.5" r="0.8" fill="#7fb07f"/><circle cx="1015.5" cy="693.5" r="3.6" fill="#b9b9b9"/><circle cx="1015.5" cy="693.5" r="0.8" fill="#7fb07f"/><circle cx="1072.5" cy="693.5" r="3.6" fill="#b9b9b9"/><circle cx="1072.5" cy="693.5" r="0.8" fill="#7fb07f"/><circle cx="787.5" cy="722.0" r="3.6" fill="#b9b9b9"/><circle cx="787.5" cy="722.0" r="0.8" fill="#7fb07f"/><circle cx="816.0" cy="722.0" r="3.6" fill="#b9b9b9"/><circle cx="816.0" cy="722.0" r="0.8" fill="#7fb07f"/><circle cx="844.5" cy="722.0" r="3.6" fill="#b9b9b9"/><circle cx="844.5" cy="722.0" r="0.8" fill="#7fb07f"/><circle cx="873.0" cy="722.0" r="3.6" fill="#b9b9b9"/><circle cx="873.0" cy="722.0" r="0.8" fill="#7fb07f"/><circle cx="958.5" cy="722.0" r="3.6" fill="#b9b9b9"/><circle cx="958.5" cy="722.0" r="0.8" fill="#7fb07f"/><circle cx="987.0" cy="722.0" r="3.6" fill="#b9b9b9"/><circle cx="987.0" cy="722.0" r="0.8" fill="#7fb07f"/><circle cx="1015.5" cy="722.0" r="3.6" fill="#b9b9b9"/><circle cx="1015.5" cy="722.0" r="0.8" fill="#7fb07f"/><circle cx="1044.0" cy="722.0" r="3.6" fill="#b9b9b9"/><circle cx="1044.0" cy="722.0" r="0.8" fill="#7fb07f"/><circle cx="1072.5" cy="722.0" r="3.6" fill="#b9b9b9"/><circle cx="1072.5" cy="722.0" r="0.8" fill="#7fb07f"/><circle cx="809.5" cy="304.4" r="3.6" fill="#b9b9b9"/><circle cx="809.5" cy="304.4" r="0.8" fill="#7fb07f"/><circle cx="920" cy="324.4" r="3.6" fill="#b9b9b9"/><circle cx="920" cy="324.4" r="0.8" fill="#7fb07f"/><circle cx="1013.6" cy="327.3" r="3.6" fill="#b9b9b9"/><circle cx="1013.6" cy="327.3" r="0.8" fill="#7fb07f"/><circle cx="1031.8" cy="327.3" r="3.6" fill="#b9b9b9"/><circle cx="1031.8" cy="327.3" r="0.8" fill="#7fb07f"/><circle cx="1013.6" cy="337.8" r="3.6" fill="#b9b9b9"/><circle cx="1013.6" cy="337.8" r="0.8" fill="#7fb07f"/><circle cx="1031.8" cy="337.8" r="3.6" fill="#b9b9b9"/><circle cx="1031.8" cy="337.8" r="0.8" fill="#7fb07f"/><circle cx="1013.6" cy="348.4" r="3.6" fill="#b9b9b9"/><circle cx="1013.6" cy="348.4" r="0.8" fill="#7fb07f"/><circle cx="1031.8" cy="348.4" r="3.6" fill="#b9b9b9"/><circle cx="1031.8" cy="348.4" r="0.8" fill="#7fb07f"/><circle cx="1058.5" cy="417.4" r="3.6" fill="#b9b9b9"/><circle cx="1058.5" cy="417.4" r="0.8" fill="#7fb07f"/><circle cx="1047" cy="464.4" r="3.6" fill="#b9b9b9"/><circle cx="1047" cy="464.4" r="0.8" fill="#7fb07f"/><circle cx="757" cy="488.6" r="3.6" fill="#b9b9b9"/><circle cx="757" cy="488.6" r="0.8" fill="#7fb07f"/><circle cx="772" cy="504.6" r="3.6" fill="#b9b9b9"/><circle cx="772" cy="504.6" r="0.8" fill="#7fb07f"/><circle cx="739.8" cy="417" r="3.6" fill="#b9b9b9"/><circle cx="739.8" cy="417" r="0.8" fill="#7fb07f"/><circle cx="881.7" cy="479.8" r="3.6" fill="#b9b9b9"/><circle cx="881.7" cy="479.8" r="0.8" fill="#7fb07f"/><circle cx="860.2" cy="500.4" r="3.6" fill="#b9b9b9"/><circle cx="860.2" cy="500.4" r="0.8" fill="#7fb07f"/><circle cx="818.9" cy="535.2" r="3.6" fill="#b9b9b9"/><circle cx="818.9" cy="535.2" r="0.8" fill="#7fb07f"/><circle cx="833.2" cy="532.7" r="3.6" fill="#b9b9b9"/><circle cx="833.2" cy="532.7" r="0.8" fill="#7fb07f"/><circle cx="844.5" cy="518.1" r="3.6" fill="#b9b9b9"/><circle cx="844.5" cy="518.1" r="0.8" fill="#7fb07f"/><circle cx="858.4" cy="518.1" r="3.6" fill="#b9b9b9"/><circle cx="858.4" cy="518.1" r="0.8" fill="#7fb07f"/><circle cx="894.5" cy="558.9" r="3.6" fill="#b9b9b9"/><circle cx="894.5" cy="558.9" r="0.8" fill="#7fb07f"/><circle cx="872.8" cy="636.2" r="3.6" fill="#b9b9b9"/><circle cx="872.8" cy="636.2" r="0.8" fill="#7fb07f"/><circle cx="882" cy="538.6" r="3.6" fill="#b9b9b9"/><circle cx="882" cy="538.6" r="0.8" fill="#7fb07f"/><circle cx="928.8" cy="556.4" r="3.6" fill="#b9b9b9"/><circle cx="928.8" cy="556.4" r="0.8" fill="#7fb07f"/><circle cx="944.2" cy="559.3" r="3.6" fill="#b9b9b9"/><circle cx="944.2" cy="559.3" r="0.8" fill="#7fb07f"/><circle cx="918.7" cy="589" r="3.6" fill="#b9b9b9"/><circle cx="918.7" cy="589" r="0.8" fill="#7fb07f"/><circle cx="922.9" cy="602.6" r="3.6" fill="#b9b9b9"/><circle cx="922.9" cy="602.6" r="0.8" fill="#7fb07f"/><circle cx="1060.6" cy="497" r="3.6" fill="#b9b9b9"/><circle cx="1060.6" cy="497" r="0.8" fill="#7fb07f"/><circle cx="976" cy="588" r="3.6" fill="#b9b9b9"/><circle cx="976" cy="588" r="0.8" fill="#7fb07f"/><circle cx="964.2" cy="646.5" r="3.6" fill="#b9b9b9"/><circle cx="964.2" cy="646.5" r="0.8" fill="#7fb07f"/><circle cx="951.3" cy="628.5" r="3.6" fill="#b9b9b9"/><circle cx="951.3" cy="628.5" r="0.8" fill="#7fb07f"/><circle cx="910.3" cy="674.7" r="3.6" fill="#b9b9b9"/><circle cx="910.3" cy="674.7" r="0.8" fill="#7fb07f"/></g>
<g><polyline points="764.0,336.3 752.8,336.3 752.8,463.3" fill="none" stroke="#2cd6d6" stroke-width="1.0"/><polyline points="890.0,336.3 902.7,336.3 902.7,463.3" fill="none" stroke="#2cd6d6" stroke-width="1.0"/><polyline points="752.8,367.8 742.4,367.8 742.4,431.9 752.8,431.9" fill="none" stroke="#2cd6d6" stroke-width="1.0"/><polyline points="897.5,320.5 898.5,320.5" fill="none" stroke="#2cd6d6" stroke-width="1"/><polyline points="1014.0,301.5 1033.0,301.5" fill="none" stroke="#2cd6d6" stroke-width="1"/><polyline points="963.5,364.4 952.5,364.4 952.5,377.0" fill="none" stroke="#2aa8a8" stroke-width="1"/><polyline points="1029.5,364.4 1040.0,364.4 1040.0,377.0" fill="none" stroke="#2aa8a8" stroke-width="1"/><polyline points="952.2,442.0 952.2,452.0 963.4,452.0" fill="none" stroke="#2aa8a8" stroke-width="1"/><polyline points="922.0,465.3 940.0,465.3" fill="none" stroke="#2cd6d6" stroke-width="1"/><polyline points="920.0,511.3 936.0,511.3" fill="none" stroke="#2cd6d6" stroke-width="1"/><polyline points="905.7,472.0 905.7,508.0" fill="none" stroke="#2cd6d6" stroke-width="1"/><polyline points="951.9,472.0 951.9,508.0" fill="none" stroke="#2cd6d6" stroke-width="1"/><polyline points="752.8,463.3 764.0,463.3" fill="none" stroke="#2cd6d6" stroke-width="1.0"/><rect x="758.5" y="532.5" width="18.5" height="157.5" fill="none" stroke="#2cd6d6" stroke-width="1.0"/><polyline points="758.5,532.5 758.5,514.5 768.0,514.5" fill="none" stroke="#2cd6d6" stroke-width="1.0"/><rect x="815.5" y="564" width="35.5" height="34.5" fill="none" stroke="#2aa8a8" stroke-width="1"/><polyline points="812.0,556.0 812.0,580.0" fill="none" stroke="#2aa8a8" stroke-width="1"/><rect x="837.6" y="621" width="69.29999999999995" height="47.5" fill="none" stroke="#2cd6d6" stroke-width="1.6"/><polyline points="847.5,621.0 847.5,633.0" fill="none" stroke="#888" stroke-width="1"/><polyline points="897.0,621.0 897.0,633.0" fill="none" stroke="#888" stroke-width="1"/><polyline points="860.0,645.0 870.0,645.0" fill="none" stroke="#2cd6d6" stroke-width="1"/><polyline points="876.0,645.0 885.0,645.0" fill="none" stroke="#2cd6d6" stroke-width="1"/><polyline points="870.0,638.0 870.0,652.0" fill="none" stroke="#2cd6d6" stroke-width="1"/><polyline points="870.0,645.0 876.0,638.0 876.0,652.0 870.0,645.0" fill="none" stroke="#2cd6d6" stroke-width="1"/><polyline points="866.0,527.0 890.0,527.0" fill="none" stroke="#2cd6d6" stroke-width="1"/><polyline points="866.0,552.0 890.0,552.0" fill="none" stroke="#2cd6d6" stroke-width="1"/><rect x="909.5" y="520.5" width="32.5" height="31.5" fill="none" stroke="#2cd6d6" stroke-width="1.2"/><polyline points="909.0,548.0 937.0,525.0" fill="none" stroke="#e0c0e0" stroke-width="0.6"/><polyline points="914.0,572.0 914.0,587.0" fill="none" stroke="#2cd6d6" stroke-width="1"/><polyline points="940.0,572.0 940.0,587.0" fill="none" stroke="#2cd6d6" stroke-width="1"/><polyline points="1000.0,496.9 1007.0,496.9" fill="none" stroke="#2cd6d6" stroke-width="1"/><polyline points="1013.0,496.9 1024.0,496.9" fill="none" stroke="#2cd6d6" stroke-width="1"/><polyline points="1007.0,491.9 1007.0,501.9" fill="none" stroke="#2cd6d6" stroke-width="1"/><polyline points="1007.0,496.9 1013.0,491.9 1013.0,501.9 1007.0,496.9" fill="none" stroke="#2cd6d6" stroke-width="1"/><polyline points="1000.0,544.9 1007.0,544.9" fill="none" stroke="#2cd6d6" stroke-width="1"/><polyline points="1013.0,544.9 1024.0,544.9" fill="none" stroke="#2cd6d6" stroke-width="1"/><polyline points="1007.0,539.9 1007.0,549.9" fill="none" stroke="#2cd6d6" stroke-width="1"/><polyline points="1007.0,544.9 1013.0,539.9 1013.0,549.9 1007.0,544.9" fill="none" stroke="#2cd6d6" stroke-width="1"/><rect x="977" y="473.8" width="60.5" height="44.400000000000034" fill="none" stroke="#2cd6d6" stroke-width="1.3"/><polyline points="985.5,478.0 1048.0,478.0 1048.0,566.0" fill="none" stroke="#888" stroke-width="1"/><polyline points="977.0,521.2 1037.5,521.2" fill="none" stroke="#2cd6d6" stroke-width="2.2"/><rect x="977" y="521.2" width="60.5" height="44.799999999999955" fill="none" stroke="#2cd6d6" stroke-width="1.3"/><polyline points="985.5,478.0 985.5,485.0" fill="none" stroke="#888" stroke-width="1"/><polyline points="1037.5,478.0 1037.5,485.0" fill="none" stroke="#888" stroke-width="1"/><circle cx="971" cy="514" r="2" fill="#2cd6d6"/><circle cx="971" cy="556" r="2" fill="#2cd6d6"/><rect x="1007" y="576.6" width="61.59999999999991" height="74.60000000000002" fill="none" stroke="#8a8a8a" stroke-width="2"/><polyline points="1007.0,576.6 1068.6,576.6 1068.6,651.2" fill="none" stroke="#2aa8a8" stroke-width="1"/><circle cx="1024" cy="641" r="2" fill="#2cd6d6"/><polyline points="997.5,600.0 1000.0,603.0 1000.0,628.0 997.0,631.0" fill="none" stroke="#2cd6d6" stroke-width="1"/><rect x="966" y="652" width="10" height="24" fill="none" stroke="#2cd6d6" stroke-width="1"/><rect x="981" y="652" width="10" height="24" fill="none" stroke="#2cd6d6" stroke-width="1"/><rect x="1030.5" y="667.5" width="34.0" height="44.0" fill="none" stroke="#2cd6d6" stroke-width="1"/><rect x="1034.5" y="672" width="26.0" height="34" fill="none" stroke="#2cd6d6" stroke-width="1"/><rect x="911.7" y="622" width="32.299999999999955" height="32" fill="none" stroke="#2cd6d6" stroke-width="1.2"/><polyline points="922.0,637.0 934.0,637.0" fill="none" stroke="#2cd6d6" stroke-width="1"/><rect x="913.7" y="661.7" width="27.799999999999955" height="25.09999999999991" fill="none" stroke="#2cd6d6" stroke-width="1"/><rect x="883.4" y="710.3" width="62.80000000000007" height="32.30000000000007" fill="none" stroke="#2aa8a8" stroke-width="1"/><polyline points="891.4,721.0 939.6,721.0" fill="none" stroke="#2cd6d6" stroke-width="1"/><polyline points="891.4,739.8 939.6,739.8" fill="none" stroke="#2cd6d6" stroke-width="1"/><polyline points="891.4,724.0 890.0,730.0 891.4,736.0" fill="none" stroke="#2cd6d6" stroke-width="1"/><polyline points="939.6,724.0 941.0,730.0 939.6,736.0" fill="none" stroke="#2cd6d6" stroke-width="1"/><polyline points="905.0,743.0 905.0,752.0" fill="none" stroke="#2cd6d6" stroke-width="1"/><polyline points="915.0,743.0 915.0,752.0" fill="none" stroke="#2cd6d6" stroke-width="1"/><polyline points="905.0,750.0 915.0,750.0" fill="none" stroke="#2cd6d6" stroke-width="1"/><path d="M813 702 H825 V705.5 H817 V708.5 H824 V711.5 H817 V717 H813 V715 L812 714 L814 712.5 L812 711 L814 709.5 L812 708 L814 706.5 L812 705 L813 704 Z" fill="none" stroke="#2cd6d6" stroke-width="1"/></g>
<g><text x="756.0" y="303.59999999999997" font-size="11" fill="#f4f4f4" text-anchor="middle" font-weight="bold" letter-spacing="0">1</text><text x="756.6999999999999" y="727.6" font-size="11" fill="#f4f4f4" text-anchor="middle" font-weight="bold" letter-spacing="0">1</text><text x="777.8000000000001" y="345.2" font-size="10" fill="#f4f4f4" text-anchor="middle" font-weight="bold" letter-spacing="-0.3" transform="rotate(-90 777.8000000000001 345.2)">5V</text><text x="795.8000000000001" y="345.2" font-size="8.6" fill="#f4f4f4" text-anchor="middle" font-weight="bold" letter-spacing="-0.3" transform="rotate(-90 795.8000000000001 345.2)">GND</text><text x="813.7" y="345.2" font-size="10" fill="#f4f4f4" text-anchor="middle" font-weight="bold" letter-spacing="-0.3" transform="rotate(-90 813.7 345.2)">3V3</text><text x="741" y="447" font-size="6" fill="#2cb8b8" text-anchor="start" font-weight="normal" letter-spacing="0" transform="rotate(-90 741 447)">U5</text><text x="893" y="313" font-size="5" fill="#333" text-anchor="start" font-weight="normal" letter-spacing="0">R31</text><text x="869" y="304.8" font-size="5.5" fill="#333" text-anchor="start" font-weight="normal" letter-spacing="0">2023.11.11</text><text x="1015.3" y="310.5" font-size="6.5" fill="#f4f4f4" text-anchor="middle" font-weight="bold" letter-spacing="0" transform="rotate(-90 1015.3 310.5)">GND</text><text x="1036.3" y="310.5" font-size="6.5" fill="#f4f4f4" text-anchor="middle" font-weight="bold" letter-spacing="0" transform="rotate(-90 1036.3 310.5)">GND</text><text x="999" y="408" font-size="9" fill="#2cd6d6" text-anchor="middle" font-weight="normal" letter-spacing="0" transform="rotate(-90 999 408)">U4</text><text x="1072" y="419" font-size="5" fill="#555" text-anchor="start" font-weight="normal" letter-spacing="0" transform="rotate(90 1072 419)">R14</text><text x="912.3" y="469.1" font-size="10" fill="#f4f4f4" text-anchor="middle" font-weight="bold" letter-spacing="0">2</text><text x="944.8" y="469.1" font-size="10" fill="#f4f4f4" text-anchor="middle" font-weight="bold" letter-spacing="0">1</text><text x="912.3" y="515.1" font-size="10" fill="#f4f4f4" text-anchor="middle" font-weight="bold" letter-spacing="0">2</text><text x="944.8" y="515.1" font-size="10" fill="#f4f4f4" text-anchor="middle" font-weight="bold" letter-spacing="0">1</text><text x="894" y="482" font-size="6" fill="#bb4444" text-anchor="start" font-weight="normal" letter-spacing="0">SW2</text><text x="916" y="443" font-size="5.5" fill="#bb4444" text-anchor="start" font-weight="normal" letter-spacing="0">R13</text><text x="928" y="489" font-size="5.5" fill="#333" text-anchor="middle" font-weight="normal" letter-spacing="0" transform="rotate(-90 928 489)">SW3</text><text x="985" y="471" font-size="6" fill="#bb4444" text-anchor="start" font-weight="normal" letter-spacing="0">C11</text><text x="755.5" y="523.2" font-size="8.6" fill="#38c4c4" text-anchor="end" font-weight="normal" letter-spacing="-0.2">PIO1</text><text x="755.5" y="541.8000000000001" font-size="8.6" fill="#38c4c4" text-anchor="end" font-weight="normal" letter-spacing="-0.2">PIO2</text><text x="755.5" y="560.4000000000001" font-size="8.6" fill="#38c4c4" text-anchor="end" font-weight="normal" letter-spacing="-0.2">SDA</text><text x="755.5" y="579.0" font-size="8.6" fill="#38c4c4" text-anchor="end" font-weight="normal" letter-spacing="-0.2">SCL</text><text x="755.5" y="597.6" font-size="8.6" fill="#38c4c4" text-anchor="end" font-weight="normal" letter-spacing="-0.2">GND</text><text x="755.5" y="616.2" font-size="8.6" fill="#38c4c4" text-anchor="end" font-weight="normal" letter-spacing="-0.2">A</text><text x="755.5" y="634.8000000000001" font-size="8.6" fill="#38c4c4" text-anchor="end" font-weight="normal" letter-spacing="-0.2">B</text><text x="755.5" y="653.4000000000001" font-size="8.6" fill="#38c4c4" text-anchor="end" font-weight="normal" letter-spacing="-0.2">GND</text><text x="755.5" y="672.0" font-size="8.6" fill="#38c4c4" text-anchor="end" font-weight="normal" letter-spacing="-0.2">3.3V</text><text x="755.5" y="690.6" font-size="8.6" fill="#38c4c4" text-anchor="end" font-weight="normal" letter-spacing="-0.2">12_5V</text><text x="833" y="575" font-size="6" fill="#555" text-anchor="middle" font-weight="normal" letter-spacing="0">U1</text><text x="791" y="585" font-size="5" fill="#bb4444" text-anchor="start" font-weight="normal" letter-spacing="0">R39</text><text x="868" y="585" font-size="5" fill="#bb4444" text-anchor="start" font-weight="normal" letter-spacing="0">C14</text><text x="826" y="622" font-size="5" fill="#555" text-anchor="start" font-weight="normal" letter-spacing="0">R14</text><text x="860" y="603" font-size="5.5" fill="#bb4444" text-anchor="start" font-weight="normal" letter-spacing="0">R16</text><text x="869" y="634" font-size="6" fill="#bb4444" text-anchor="start" font-weight="normal" letter-spacing="0">D4</text><text x="810" y="651" font-size="5" fill="#333" text-anchor="start" font-weight="normal" letter-spacing="0">C184</text><text x="852" y="645" font-size="12" fill="#f4f4f4" text-anchor="middle" font-weight="bold" letter-spacing="0" transform="rotate(-90 852 645)">K</text><text x="901" y="645" font-size="12" fill="#f4f4f4" text-anchor="middle" font-weight="bold" letter-spacing="0" transform="rotate(-90 901 645)">A</text><text x="890" y="509" font-size="6" fill="#bb4444" text-anchor="start" font-weight="normal" letter-spacing="0">C5</text><text x="890" y="522" font-size="6" fill="#bb4444" text-anchor="start" font-weight="normal" letter-spacing="0">C6</text><text x="848" y="538" font-size="5" fill="#bb4444" text-anchor="start" font-weight="normal" letter-spacing="0">R7</text><text x="888" y="576" font-size="6" fill="#bb4444" text-anchor="start" font-weight="normal" letter-spacing="0" transform="rotate(-90 888 576)">C4</text><text x="925" y="528.5" font-size="7" fill="#f4f4f4" text-anchor="middle" font-weight="bold" letter-spacing="0">P2</text><text x="925" y="550" font-size="7" fill="#f4f4f4" text-anchor="middle" font-weight="bold" letter-spacing="0">P1</text><text x="899" y="535" font-size="5.5" fill="#bb4444" text-anchor="start" font-weight="normal" letter-spacing="0" transform="rotate(-90 899 535)">U3</text><text x="948" y="593" font-size="5.5" fill="#bb4444" text-anchor="start" font-weight="normal" letter-spacing="0">R2</text><text x="958" y="566" font-size="5.5" fill="#bb4444" text-anchor="start" font-weight="normal" letter-spacing="0" transform="rotate(-90 958 566)">C1</text><text x="992.5" y="496.85" font-size="12.5" fill="#f4f4f4" text-anchor="middle" font-weight="bold" letter-spacing="0" transform="rotate(-90 992.5 496.85)">K</text><text x="1041" y="496.85" font-size="12.5" fill="#f4f4f4" text-anchor="middle" font-weight="bold" letter-spacing="0" transform="rotate(-90 1041 496.85)">A</text><text x="1010" y="482.85" font-size="6" fill="#bb4444" text-anchor="middle" font-weight="normal" letter-spacing="0">D3</text><text x="992.5" y="544.85" font-size="12.5" fill="#f4f4f4" text-anchor="middle" font-weight="bold" letter-spacing="0" transform="rotate(-90 992.5 544.85)">K</text><text x="1041" y="544.85" font-size="12.5" fill="#f4f4f4" text-anchor="middle" font-weight="bold" letter-spacing="0" transform="rotate(-90 1041 544.85)">A</text><text x="1010" y="530.85" font-size="6" fill="#bb4444" text-anchor="middle" font-weight="normal" letter-spacing="0">D1</text><text x="1052" y="501" font-size="8" fill="#f4f4f4" text-anchor="middle" font-weight="bold" letter-spacing="0">2.5</text><text x="992" y="522" font-size="8" fill="#f4f4f4" text-anchor="middle" font-weight="bold" letter-spacing="0" transform="rotate(-90 992 522)">813N</text><text x="1054.5" y="593" font-size="10.5" fill="#f4f4f4" text-anchor="middle" font-weight="bold" letter-spacing="0" transform="rotate(90 1054.5 593)">Net 11</text><text x="1052" y="567" font-size="8" fill="#f4f4f4" text-anchor="middle" font-weight="bold" letter-spacing="0" transform="rotate(55 1052 567)">Net 11</text><text x="1063" y="540" font-size="6" fill="#bb4444" text-anchor="start" font-weight="normal" letter-spacing="0">D1</text><text x="1032.5" y="596" font-size="8" fill="#f4f4f4" text-anchor="middle" font-weight="bold" letter-spacing="0" transform="rotate(90 1032.5 596)">P2</text><text x="1033" y="631.5" font-size="8" fill="#f4f4f4" text-anchor="middle" font-weight="bold" letter-spacing="0" transform="rotate(90 1033 631.5)">P1</text><text x="1080" y="614" font-size="8.5" fill="#38c4c4" text-anchor="middle" font-weight="normal" letter-spacing="0" transform="rotate(-90 1080 614)">SOLAR IN</text><text x="1080" y="688" font-size="8.5" fill="#38c4c4" text-anchor="middle" font-weight="normal" letter-spacing="0" transform="rotate(-90 1080 688)">BAT IN</text><text x="1079" y="647" font-size="8" fill="#38c4c4" text-anchor="middle" font-weight="normal" letter-spacing="0">+</text><text x="1079" y="675" font-size="8" fill="#38c4c4" text-anchor="middle" font-weight="normal" letter-spacing="0">+</text><text x="1040" y="620" font-size="6" fill="#bb4444" text-anchor="start" font-weight="normal" letter-spacing="0" transform="rotate(-90 1040 620)">J1</text><text x="1005" y="615" font-size="6" fill="#bb4444" text-anchor="middle" font-weight="normal" letter-spacing="0" transform="rotate(-90 1005 615)">U2</text><text x="1039" y="686" font-size="8.5" fill="#f4f4f4" text-anchor="middle" font-weight="bold" letter-spacing="0">Net 3</text><text x="918.5" y="638" font-size="7" fill="#f4f4f4" text-anchor="middle" font-weight="bold" letter-spacing="0" transform="rotate(-90 918.5 638)">D2</text><text x="939.5" y="638" font-size="7" fill="#f4f4f4" text-anchor="middle" font-weight="bold" letter-spacing="0" transform="rotate(-90 939.5 638)">D3</text><text x="928" y="677" font-size="6" fill="#555" text-anchor="middle" font-weight="normal" letter-spacing="0">IC1</text><text x="959" y="682" font-size="6" fill="#bb4444" text-anchor="start" font-weight="normal" letter-spacing="0" transform="rotate(-90 959 682)">C3</text><text x="935" y="691" font-size="5" fill="#bb4444" text-anchor="start" font-weight="normal" letter-spacing="0">R7</text><text x="953" y="691" font-size="5" fill="#bb4444" text-anchor="start" font-weight="normal" letter-spacing="0">R8</text><text x="898.9" y="722" font-size="7" fill="#e8e8e8" text-anchor="middle" font-weight="normal" letter-spacing="0">A</text><text x="920.4" y="722" font-size="7" fill="#e8e8e8" text-anchor="middle" font-weight="normal" letter-spacing="0">B</text><text x="930.7" y="722" font-size="7" fill="#e8e8e8" text-anchor="middle" font-weight="normal" letter-spacing="0">C</text><text x="880.8" y="734.3" font-size="9" fill="#38c4c4" text-anchor="end" font-weight="normal" letter-spacing="0">+5V</text><text x="948.8" y="734.3" font-size="9" fill="#38c4c4" text-anchor="start" font-weight="normal" letter-spacing="0">+12V</text><text x="918" y="710" font-size="5" fill="#555" text-anchor="start" font-weight="normal" letter-spacing="0">SW1</text><text x="810.7" y="688" font-size="9.6" fill="#24dcdc" stroke="#24dcdc" stroke-width="0.15" letter-spacing="-0.2">MADE WITH:</text><text x="826" y="714.4" font-size="8" fill="#2cd6d6" text-anchor="start" font-weight="normal" letter-spacing="0">LUX.AI</text></g>
</svg>
</body></html>
